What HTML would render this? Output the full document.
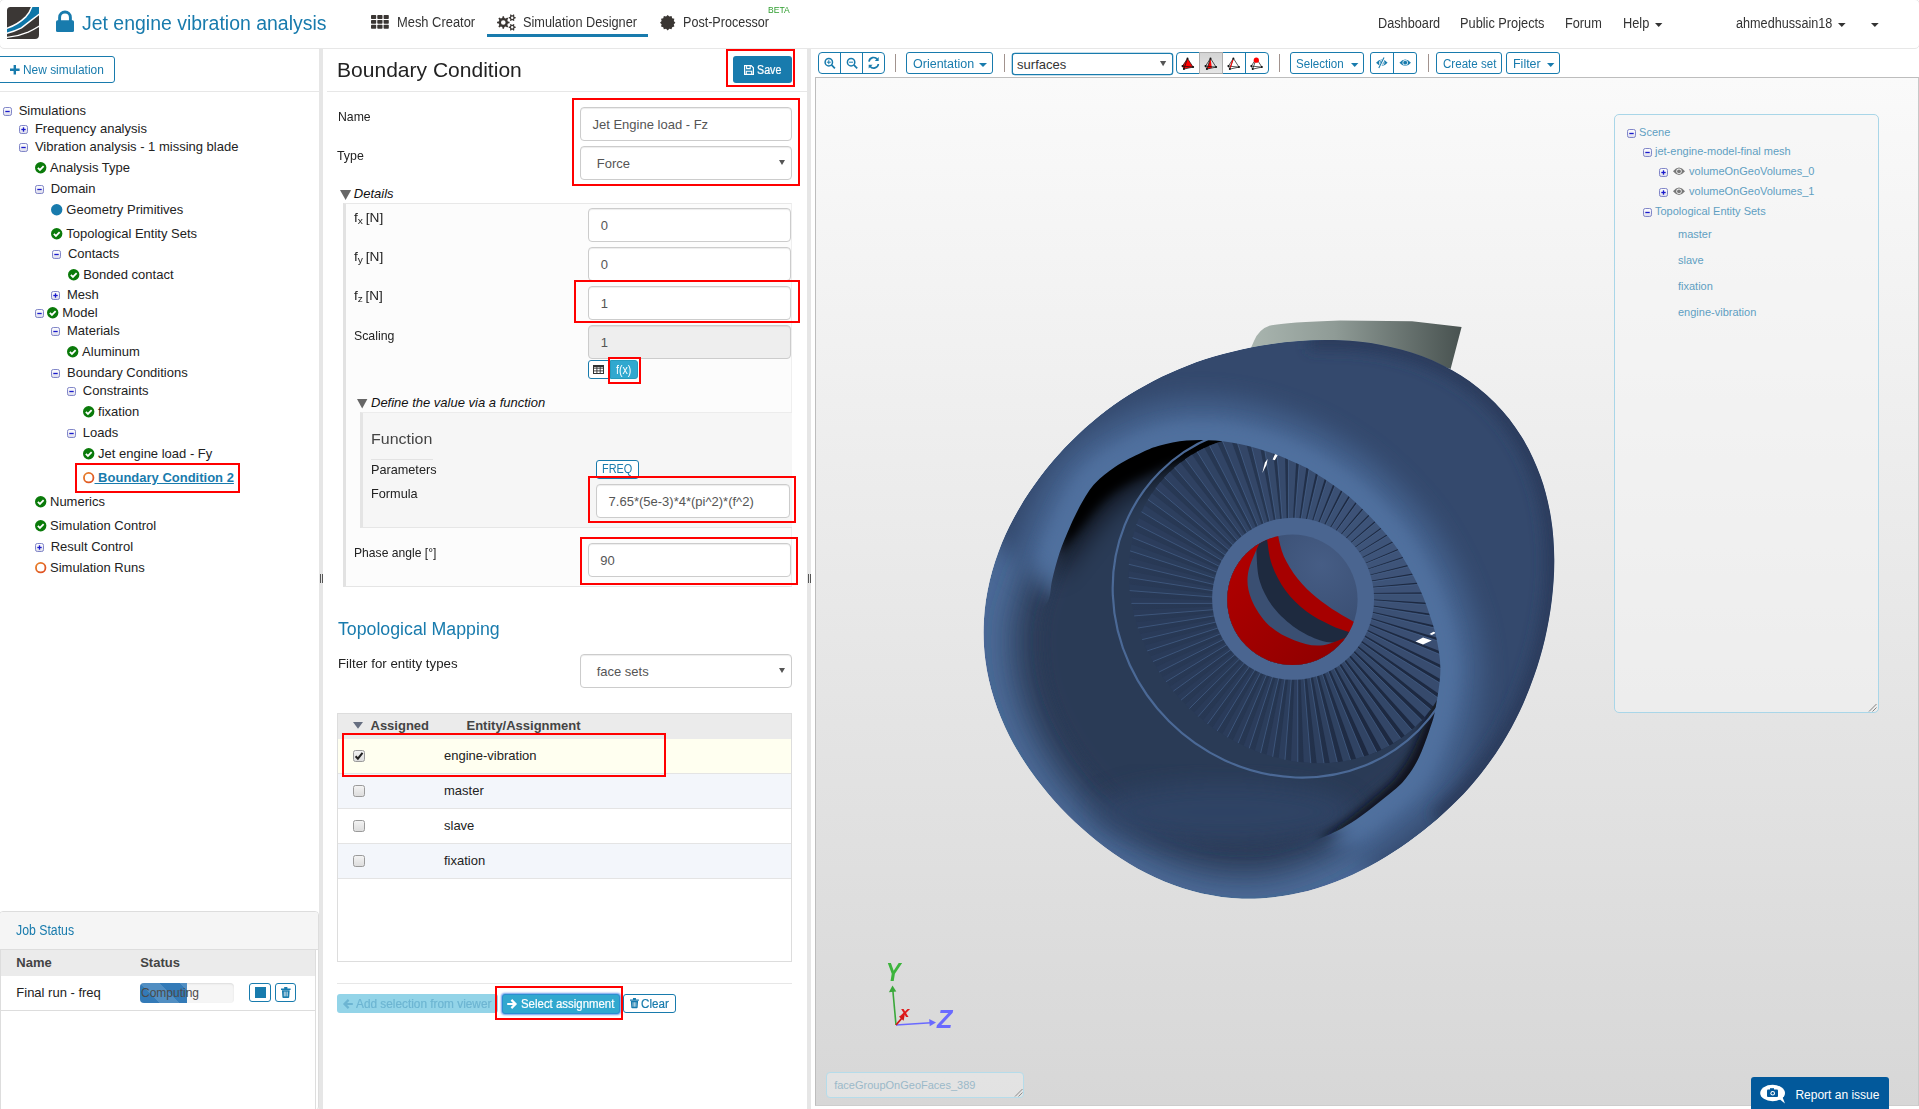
<!DOCTYPE html>
<html lang="en"><head><meta charset="utf-8"><title>Jet engine vibration analysis</title>
<style>
html,body{margin:0;padding:0;background:#fff;overflow:hidden;}
body{width:1919px;height:1109px;position:relative;overflow:hidden;font-family:"Liberation Sans",sans-serif;}
body>div,body>span,body>svg{position:absolute;box-sizing:border-box;}
body>div>div{position:absolute;box-sizing:border-box;}
.t{white-space:nowrap;transform-origin:0 0;display:block;}
svg{overflow:visible;}
</style></head>
<body>
<svg width="0" height="0" style="left:0;top:0;"><defs><linearGradient id="tg" x1="0" y1="0" x2="0" y2="1"><stop offset="0" stop-color="#fff"/><stop offset="1" stop-color="#dcdcec"/></linearGradient><linearGradient id="rg" x1="0" y1="0" x2="1" y2="1"><stop offset="0" stop-color="#e8832a"/><stop offset="1" stop-color="#de4a22"/></linearGradient><linearGradient id="cb" x1="0" y1="0" x2="0" y2="1"><stop offset="0" stop-color="#f4f4f4"/><stop offset="1" stop-color="#dcdcdc"/></linearGradient></defs></svg>
<div style="left:815px;top:77px;width:1104px;height:1029px;border:1px solid #bdbdbd;border-right-color:#c8c8c8;border-bottom-color:#cdcdcd;background:linear-gradient(#fafafa,#d7d7d7);"></div>
<svg style="left:960px;top:300px;" width="640" height="620" viewBox="960 300 640 620"><defs><linearGradient id="py" x1="0" y1="0" x2="1" y2="0"><stop offset="0" stop-color="#a9b5af"/><stop offset=".4" stop-color="#8f9b96"/><stop offset="1" stop-color="#485250"/></linearGradient><linearGradient id="rd" x1="0" y1="0" x2="1" y2="1"><stop offset="0" stop-color="#bb0000"/><stop offset="1" stop-color="#840000"/></linearGradient><linearGradient id="fd" x1="0" y1="1" x2="1" y2="0"><stop offset="0" stop-color="#2a3b58"/><stop offset=".45" stop-color="#263651"/><stop offset=".62" stop-color="#1d2941"/><stop offset="1" stop-color="#1d2941"/></linearGradient><radialGradient id="hb" cx=".7" cy=".25" r=".8"><stop offset="0" stop-color="#465d85"/><stop offset="1" stop-color="#324567"/></radialGradient><clipPath id="co"><path d="M983.9 620.0C984.6 606.8 986.7 593.4 989.7 580.6C992.7 567.8 997.0 555.2 1001.9 543.1C1006.8 531.1 1012.8 519.4 1019.2 508.4C1025.7 497.3 1032.9 486.7 1040.5 476.6C1048.1 466.5 1056.3 456.9 1064.8 447.8C1073.4 438.8 1082.4 430.2 1091.9 422.2C1101.3 414.2 1111.2 406.6 1121.4 399.8C1131.7 392.9 1142.4 386.6 1153.4 380.9C1164.4 375.2 1175.8 370.2 1187.4 365.7C1199.0 361.2 1210.9 357.4 1223.1 354.1C1235.3 350.8 1247.7 348.0 1260.4 345.8C1273.1 343.6 1286.1 341.9 1299.3 341.0C1312.5 340.1 1326.1 339.6 1339.7 340.3C1353.4 340.9 1367.4 342.2 1381.2 344.9C1394.9 347.5 1409.0 351.1 1422.3 356.2C1435.6 361.3 1448.9 367.7 1461.0 375.5C1473.1 383.2 1484.8 392.5 1494.9 402.8C1505.1 413.0 1514.2 424.8 1521.8 437.0C1529.4 449.3 1535.6 462.7 1540.5 476.2C1545.4 489.6 1548.7 503.8 1551.0 517.7C1553.3 531.6 1554.1 545.8 1554.3 559.6C1554.4 573.3 1553.4 587.0 1551.8 600.3C1550.2 613.6 1547.8 626.6 1544.9 639.2C1541.9 651.9 1538.3 664.2 1534.1 676.1C1530.0 688.1 1525.2 699.7 1519.9 711.0C1514.6 722.2 1508.7 733.1 1502.2 743.5C1495.7 753.9 1488.6 763.9 1481.1 773.4C1473.6 782.9 1465.5 792.0 1457.0 800.6C1448.5 809.2 1439.6 817.4 1430.2 825.1C1420.9 832.9 1411.2 840.2 1401.1 847.0C1390.9 853.9 1380.4 860.4 1369.5 866.2C1358.5 872.0 1347.1 877.5 1335.3 881.9C1323.5 886.4 1311.2 890.4 1298.7 893.1C1286.2 895.9 1273.2 897.8 1260.3 898.4C1247.4 899.1 1234.1 898.6 1221.2 896.9C1208.3 895.2 1195.3 892.2 1182.8 888.3C1170.4 884.4 1158.1 879.2 1146.5 873.3C1134.8 867.4 1123.6 860.5 1112.8 853.0C1102.1 845.6 1091.9 837.3 1082.1 828.6C1072.4 820.0 1063.1 810.7 1054.4 800.9C1045.7 791.1 1037.4 780.9 1029.9 770.0C1022.4 759.2 1015.3 747.9 1009.3 736.1C1003.4 724.2 998.1 711.8 994.1 699.1C990.1 686.4 987.0 673.2 985.3 660.0C983.6 646.8 983.1 633.2 983.9 620.0Z"/></clipPath><clipPath id="cr"><path clip-rule="evenodd" d="M983.9 620.0C984.6 606.8 986.7 593.4 989.7 580.6C992.7 567.8 997.0 555.2 1001.9 543.1C1006.8 531.1 1012.8 519.4 1019.2 508.4C1025.7 497.3 1032.9 486.7 1040.5 476.6C1048.1 466.5 1056.3 456.9 1064.8 447.8C1073.4 438.8 1082.4 430.2 1091.9 422.2C1101.3 414.2 1111.2 406.6 1121.4 399.8C1131.7 392.9 1142.4 386.6 1153.4 380.9C1164.4 375.2 1175.8 370.2 1187.4 365.7C1199.0 361.2 1210.9 357.4 1223.1 354.1C1235.3 350.8 1247.7 348.0 1260.4 345.8C1273.1 343.6 1286.1 341.9 1299.3 341.0C1312.5 340.1 1326.1 339.6 1339.7 340.3C1353.4 340.9 1367.4 342.2 1381.2 344.9C1394.9 347.5 1409.0 351.1 1422.3 356.2C1435.6 361.3 1448.9 367.7 1461.0 375.5C1473.1 383.2 1484.8 392.5 1494.9 402.8C1505.1 413.0 1514.2 424.8 1521.8 437.0C1529.4 449.3 1535.6 462.7 1540.5 476.2C1545.4 489.6 1548.7 503.8 1551.0 517.7C1553.3 531.6 1554.1 545.8 1554.3 559.6C1554.4 573.3 1553.4 587.0 1551.8 600.3C1550.2 613.6 1547.8 626.6 1544.9 639.2C1541.9 651.9 1538.3 664.2 1534.1 676.1C1530.0 688.1 1525.2 699.7 1519.9 711.0C1514.6 722.2 1508.7 733.1 1502.2 743.5C1495.7 753.9 1488.6 763.9 1481.1 773.4C1473.6 782.9 1465.5 792.0 1457.0 800.6C1448.5 809.2 1439.6 817.4 1430.2 825.1C1420.9 832.9 1411.2 840.2 1401.1 847.0C1390.9 853.9 1380.4 860.4 1369.5 866.2C1358.5 872.0 1347.1 877.5 1335.3 881.9C1323.5 886.4 1311.2 890.4 1298.7 893.1C1286.2 895.9 1273.2 897.8 1260.3 898.4C1247.4 899.1 1234.1 898.6 1221.2 896.9C1208.3 895.2 1195.3 892.2 1182.8 888.3C1170.4 884.4 1158.1 879.2 1146.5 873.3C1134.8 867.4 1123.6 860.5 1112.8 853.0C1102.1 845.6 1091.9 837.3 1082.1 828.6C1072.4 820.0 1063.1 810.7 1054.4 800.9C1045.7 791.1 1037.4 780.9 1029.9 770.0C1022.4 759.2 1015.3 747.9 1009.3 736.1C1003.4 724.2 998.1 711.8 994.1 699.1C990.1 686.4 987.0 673.2 985.3 660.0C983.6 646.8 983.1 633.2 983.9 620.0ZM1048.5 600.0C1051.2 593.4 1050.3 588.1 1052.1 580.3C1053.9 572.5 1056.4 562.3 1059.4 553.3C1062.4 544.3 1066.3 534.9 1070.2 526.2C1074.1 517.5 1078.6 508.2 1082.8 501.0C1087.0 493.8 1090.0 488.7 1095.4 483.0C1100.8 477.3 1107.5 471.8 1115.3 466.7C1123.1 461.6 1134.8 455.8 1142.3 452.3C1149.8 448.8 1152.6 447.5 1160.0 445.5C1167.4 443.5 1177.3 441.3 1186.5 440.5C1195.7 439.7 1205.8 439.8 1215.4 440.5C1225.0 441.2 1234.6 442.7 1244.2 444.9C1253.8 447.1 1264.5 450.5 1273.1 453.5C1281.7 456.5 1289.4 460.0 1296.0 463.0C1302.6 466.0 1304.3 466.3 1312.5 471.4C1320.7 476.4 1335.2 485.6 1344.9 493.3C1354.6 501.0 1362.8 509.2 1370.9 517.6C1379.0 526.0 1387.1 534.9 1393.6 543.6C1400.1 552.3 1405.2 561.5 1409.8 569.6C1414.4 577.7 1418.0 585.1 1421.2 592.3C1424.4 599.5 1426.5 605.5 1429.0 613.0C1431.5 620.5 1434.4 627.9 1436.3 637.4C1438.2 646.9 1440.5 657.9 1440.4 669.8C1440.3 681.7 1437.4 698.5 1435.5 708.8C1433.6 719.1 1431.7 723.6 1428.9 731.7C1426.1 739.9 1422.4 750.2 1418.8 757.7C1415.2 765.2 1411.5 771.0 1407.2 776.5C1402.9 782.0 1402.3 783.3 1393.0 791.0C1383.7 798.7 1364.0 814.6 1351.3 822.8C1338.6 830.9 1328.5 834.9 1317.0 839.9C1305.5 844.9 1293.5 849.6 1282.0 853.0C1270.5 856.4 1259.3 859.2 1248.0 860.0C1236.7 860.8 1225.3 859.7 1214.0 858.0C1202.7 856.3 1191.2 854.2 1180.0 850.0C1168.8 845.8 1159.5 840.5 1147.0 833.0C1134.5 825.5 1117.5 815.5 1105.0 805.0C1092.5 794.5 1081.5 782.8 1072.0 770.0C1062.5 757.2 1054.0 741.3 1048.0 728.0C1042.0 714.7 1038.7 703.0 1036.0 690.0C1033.3 677.0 1032.0 661.7 1032.0 650.0C1032.0 638.3 1033.2 628.3 1036.0 620.0C1038.8 611.7 1045.8 606.6 1048.5 600.0Z"/></clipPath><clipPath id="ch"><circle cx="1292.4" cy="599.7" r="65.2"/></clipPath><filter id="b4" x="-30%" y="-30%" width="160%" height="160%"><feGaussianBlur stdDeviation="4"/></filter><filter id="b7" x="-30%" y="-30%" width="160%" height="160%"><feGaussianBlur stdDeviation="7"/></filter><filter id="b12" x="-30%" y="-30%" width="160%" height="160%"><feGaussianBlur stdDeviation="12"/></filter><filter id="b16" x="-30%" y="-30%" width="160%" height="160%"><feGaussianBlur stdDeviation="16"/></filter><mask id="mk" maskUnits="userSpaceOnUse" x="900" y="250" width="760" height="720"><path d="M770 345L1050 590L1330 835L1700 1150L1900 200Z" fill="#fff" filter="url(#b12)"/></mask></defs><path d="M1250 350L1254 341Q1259 329 1270 325.5Q1288 322 1340 320.4L1412 321.3L1461.6 327L1450.6 369L1380 346Z" fill="url(#py)"/><g clip-path="url(#co)"><path d="M983.9 620.0C984.6 606.8 986.7 593.4 989.7 580.6C992.7 567.8 997.0 555.2 1001.9 543.1C1006.8 531.1 1012.8 519.4 1019.2 508.4C1025.7 497.3 1032.9 486.7 1040.5 476.6C1048.1 466.5 1056.3 456.9 1064.8 447.8C1073.4 438.8 1082.4 430.2 1091.9 422.2C1101.3 414.2 1111.2 406.6 1121.4 399.8C1131.7 392.9 1142.4 386.6 1153.4 380.9C1164.4 375.2 1175.8 370.2 1187.4 365.7C1199.0 361.2 1210.9 357.4 1223.1 354.1C1235.3 350.8 1247.7 348.0 1260.4 345.8C1273.1 343.6 1286.1 341.9 1299.3 341.0C1312.5 340.1 1326.1 339.6 1339.7 340.3C1353.4 340.9 1367.4 342.2 1381.2 344.9C1394.9 347.5 1409.0 351.1 1422.3 356.2C1435.6 361.3 1448.9 367.7 1461.0 375.5C1473.1 383.2 1484.8 392.5 1494.9 402.8C1505.1 413.0 1514.2 424.8 1521.8 437.0C1529.4 449.3 1535.6 462.7 1540.5 476.2C1545.4 489.6 1548.7 503.8 1551.0 517.7C1553.3 531.6 1554.1 545.8 1554.3 559.6C1554.4 573.3 1553.4 587.0 1551.8 600.3C1550.2 613.6 1547.8 626.6 1544.9 639.2C1541.9 651.9 1538.3 664.2 1534.1 676.1C1530.0 688.1 1525.2 699.7 1519.9 711.0C1514.6 722.2 1508.7 733.1 1502.2 743.5C1495.7 753.9 1488.6 763.9 1481.1 773.4C1473.6 782.9 1465.5 792.0 1457.0 800.6C1448.5 809.2 1439.6 817.4 1430.2 825.1C1420.9 832.9 1411.2 840.2 1401.1 847.0C1390.9 853.9 1380.4 860.4 1369.5 866.2C1358.5 872.0 1347.1 877.5 1335.3 881.9C1323.5 886.4 1311.2 890.4 1298.7 893.1C1286.2 895.9 1273.2 897.8 1260.3 898.4C1247.4 899.1 1234.1 898.6 1221.2 896.9C1208.3 895.2 1195.3 892.2 1182.8 888.3C1170.4 884.4 1158.1 879.2 1146.5 873.3C1134.8 867.4 1123.6 860.5 1112.8 853.0C1102.1 845.6 1091.9 837.3 1082.1 828.6C1072.4 820.0 1063.1 810.7 1054.4 800.9C1045.7 791.1 1037.4 780.9 1029.9 770.0C1022.4 759.2 1015.3 747.9 1009.3 736.1C1003.4 724.2 998.1 711.8 994.1 699.1C990.1 686.4 987.0 673.2 985.3 660.0C983.6 646.8 983.1 633.2 983.9 620.0Z" fill="#4b6a97"/><path d="M1013.9 620.0C1015.6 608.2 1019.6 596.5 1023.4 585.3C1027.1 574.2 1031.7 563.4 1036.5 553.1C1041.4 542.7 1046.5 532.6 1052.2 523.0C1058.0 513.5 1064.5 504.4 1071.2 495.8C1077.9 487.1 1085.1 478.9 1092.6 471.2C1100.1 463.4 1108.0 456.0 1116.2 449.2C1124.4 442.3 1132.9 435.9 1141.8 430.0C1150.7 424.0 1159.9 418.6 1169.4 413.7C1178.9 408.8 1188.7 404.4 1198.7 400.5C1208.7 396.6 1219.0 393.2 1229.5 390.2C1240.0 387.2 1250.7 384.6 1261.7 382.5C1272.7 380.4 1284.0 378.7 1295.5 377.6C1307.0 376.5 1318.8 375.8 1330.8 376.1C1342.8 376.3 1355.2 377.1 1367.3 379.1C1379.5 381.2 1392.0 384.0 1403.8 388.3C1415.6 392.6 1427.5 398.0 1438.2 404.7C1448.9 411.5 1459.3 419.6 1468.2 428.6C1477.1 437.7 1485.1 448.1 1491.7 458.9C1498.2 469.8 1503.5 481.8 1507.5 493.7C1511.6 505.6 1514.1 518.3 1515.8 530.5C1517.5 542.8 1517.8 555.3 1517.6 567.4C1517.3 579.4 1516.0 591.4 1514.3 602.9C1512.6 614.5 1510.1 625.7 1507.3 636.6C1504.4 647.5 1501.1 658.1 1497.2 668.3C1493.4 678.5 1489.1 688.5 1484.4 698.0C1479.6 707.6 1474.4 716.8 1468.7 725.7C1463.1 734.5 1456.9 742.9 1450.4 751.1C1443.9 759.2 1437.1 767.0 1430.0 774.5C1422.8 782.0 1415.4 789.2 1407.6 796.1C1399.8 803.0 1391.5 809.2 1383.1 815.9C1374.7 822.5 1366.3 829.6 1357.2 835.8C1348.0 842.0 1338.4 848.0 1328.1 853.2C1317.9 858.4 1307.1 863.3 1295.9 866.9C1284.8 870.4 1272.9 873.4 1261.1 874.7C1249.3 875.9 1237.1 875.6 1225.2 874.3C1213.2 873.1 1201.2 870.7 1189.6 867.4C1178.1 864.0 1166.6 859.5 1155.7 854.3C1144.8 849.1 1134.2 842.9 1124.1 836.2C1114.0 829.6 1104.1 822.3 1095.1 814.3C1086.0 806.2 1077.6 797.2 1069.9 787.9C1062.2 778.6 1055.1 768.6 1048.7 758.3C1042.3 748.0 1036.3 737.3 1031.4 726.2C1026.5 715.2 1022.2 703.6 1019.1 691.9C1016.1 680.2 1014.0 668.1 1013.1 656.1C1012.2 644.1 1012.2 631.8 1013.9 620.0Z" fill="#293a57" filter="url(#b16)"/><path d="M1013.9 620.0C1015.6 608.2 1019.6 596.5 1023.4 585.3C1027.1 574.2 1031.7 563.4 1036.5 553.1C1041.4 542.7 1046.5 532.6 1052.2 523.0C1058.0 513.5 1064.5 504.4 1071.2 495.8C1077.9 487.1 1085.1 478.9 1092.6 471.2C1100.1 463.4 1108.0 456.0 1116.2 449.2C1124.4 442.3 1132.9 435.9 1141.8 430.0C1150.7 424.0 1159.9 418.6 1169.4 413.7C1178.9 408.8 1188.7 404.4 1198.7 400.5C1208.7 396.6 1219.0 393.2 1229.5 390.2C1240.0 387.2 1250.7 384.6 1261.7 382.5C1272.7 380.4 1284.0 378.7 1295.5 377.6C1307.0 376.5 1318.8 375.8 1330.8 376.1C1342.8 376.3 1355.2 377.1 1367.3 379.1C1379.5 381.2 1392.0 384.0 1403.8 388.3C1415.6 392.6 1427.5 398.0 1438.2 404.7C1448.9 411.5 1459.3 419.6 1468.2 428.6C1477.1 437.7 1485.1 448.1 1491.7 458.9C1498.2 469.8 1503.5 481.8 1507.5 493.7C1511.6 505.6 1514.1 518.3 1515.8 530.5C1517.5 542.8 1517.8 555.3 1517.6 567.4C1517.3 579.4 1516.0 591.4 1514.3 602.9C1512.6 614.5 1510.1 625.7 1507.3 636.6C1504.4 647.5 1501.1 658.1 1497.2 668.3C1493.4 678.5 1489.1 688.5 1484.4 698.0C1479.6 707.6 1474.4 716.8 1468.7 725.7C1463.1 734.5 1456.9 742.9 1450.4 751.1C1443.9 759.2 1437.1 767.0 1430.0 774.5C1422.8 782.0 1415.4 789.2 1407.6 796.1C1399.8 803.0 1391.5 809.2 1383.1 815.9C1374.7 822.5 1366.3 829.6 1357.2 835.8C1348.0 842.0 1338.4 848.0 1328.1 853.2C1317.9 858.4 1307.1 863.3 1295.9 866.9C1284.8 870.4 1272.9 873.4 1261.1 874.7C1249.3 875.9 1237.1 875.6 1225.2 874.3C1213.2 873.1 1201.2 870.7 1189.6 867.4C1178.1 864.0 1166.6 859.5 1155.7 854.3C1144.8 849.1 1134.2 842.9 1124.1 836.2C1114.0 829.6 1104.1 822.3 1095.1 814.3C1086.0 806.2 1077.6 797.2 1069.9 787.9C1062.2 778.6 1055.1 768.6 1048.7 758.3C1042.3 748.0 1036.3 737.3 1031.4 726.2C1026.5 715.2 1022.2 703.6 1019.1 691.9C1016.1 680.2 1014.0 668.1 1013.1 656.1C1012.2 644.1 1012.2 631.8 1013.9 620.0Z" fill="#293a57" filter="url(#b7)" transform="translate(1255 640) scale(.88) translate(-1255 -640)"/><ellipse cx="1225" cy="812" rx="130" ry="30" fill="#31466a" filter="url(#b12)" opacity=".7"/><path d="M1052.1 580.3C1052.7 575.6 1053.6 561.5 1055.7 552.0C1057.8 542.5 1061.3 532.6 1064.7 523.4C1068.2 514.1 1072.4 504.2 1076.3 496.5C1080.3 488.8 1083.1 483.3 1088.5 477.1C1093.9 471.0 1100.7 465.1 1108.7 459.5C1116.7 454.0 1128.9 447.8 1136.6 444.1C1144.4 440.3 1147.4 439.0 1155.2 437.0C1162.9 435.0 1173.4 432.8 1183.1 432.1C1192.8 431.4 1203.4 431.8 1213.5 432.9C1223.6 434.0 1233.6 436.0 1243.6 438.8C1253.6 441.6 1264.6 445.6 1273.4 449.6C1282.1 453.7 1292.2 460.8 1296.0 463.0L1296.0 463.0C1292.0 463.6 1280.5 466.2 1272.2 466.7C1264.0 467.1 1254.6 465.8 1246.3 465.7C1237.9 465.7 1230.0 465.8 1221.9 466.4C1213.9 466.9 1205.7 467.6 1198.1 469.0C1190.6 470.3 1182.5 472.5 1176.4 474.4C1170.3 476.2 1168.1 477.5 1161.7 480.2C1155.2 483.0 1145.0 487.3 1137.9 491.0C1130.7 494.8 1124.3 498.8 1118.8 502.9C1113.3 507.1 1109.7 510.7 1104.7 516.2C1099.7 521.7 1094.3 528.9 1088.8 535.8C1083.3 542.7 1078.0 550.3 1071.8 557.7C1065.7 565.1 1055.4 576.5 1052.1 580.3Z" fill="#010206" filter="url(#b12)" opacity=".65"/><path d="M1059.4 553.3C1060.5 548.4 1063.3 533.6 1066.3 524.2C1069.2 514.8 1073.4 504.9 1077.1 497.1C1080.9 489.3 1083.6 483.7 1088.8 477.4C1094.1 471.2 1100.8 465.2 1108.7 459.6C1116.7 454.1 1128.9 447.8 1136.6 444.1C1144.4 440.3 1147.5 439.0 1155.2 437.1C1163.0 435.2 1173.5 433.1 1183.2 432.5C1193.0 432.0 1203.6 432.5 1213.7 433.8C1223.8 435.2 1233.9 437.2 1243.8 440.5C1253.7 443.8 1268.2 451.3 1273.1 453.5L1273.1 453.5C1268.4 453.7 1254.1 454.2 1245.2 454.5C1236.2 454.8 1227.7 454.6 1219.1 455.2C1210.5 455.8 1201.8 456.6 1193.7 458.1C1185.6 459.5 1177.0 461.9 1170.5 464.0C1164.0 466.0 1161.6 467.3 1154.8 470.4C1148.0 473.4 1137.2 478.1 1129.7 482.3C1122.2 486.4 1115.6 490.7 1109.8 495.3C1104.1 499.9 1100.4 503.7 1095.3 509.6C1090.1 515.5 1084.8 523.3 1078.8 530.6C1072.8 537.9 1062.6 549.5 1059.4 553.3Z" fill="#010206" filter="url(#b4)"/><path d="M1440.4 669.8C1440.4 676.7 1441.3 700.2 1440.5 711.2C1439.8 722.3 1438.4 727.4 1436.0 736.2C1433.6 745.0 1430.0 756.2 1426.3 764.0C1422.6 771.9 1418.7 778.0 1414.0 783.6C1409.3 789.2 1408.3 790.2 1398.2 797.6C1388.1 805.0 1367.1 820.8 1353.6 827.9C1340.1 834.9 1323.1 837.9 1317.0 839.9L1317.0 839.9C1322.4 836.3 1337.4 827.4 1349.2 818.2C1361.1 809.1 1379.7 793.1 1388.3 785.1C1396.9 777.0 1397.1 775.6 1401.1 770.1C1405.0 764.6 1408.5 759.1 1412.1 752.0C1415.6 744.9 1419.4 735.2 1422.5 727.6C1425.7 720.1 1428.0 716.3 1431.0 706.6C1434.0 697.0 1438.8 675.9 1440.4 669.8Z" fill="#070b13" filter="url(#b4)" opacity=".9"/><ellipse cx="1293.1" cy="598.8" rx="177" ry="151" fill="url(#fd)" transform="rotate(45 1293.1 598.8)"/><path d="M1371.1 600.4L1456.6 607.0L1457.4 617.4L1370.8 605.2Z" fill="#3c5175"/><path d="M1370.7 606.5L1457.5 620.1L1457.5 630.5L1370.1 611.3Z" fill="#3b5074"/><path d="M1369.9 612.5L1457.4 633.3L1456.5 643.6L1368.9 617.2Z" fill="#3a4f73"/><path d="M1368.6 618.5L1456.1 646.7L1454.3 656.8L1367.3 623.0Z" fill="#3a4e72"/><path d="M1366.8 624.4L1453.6 660.0L1450.8 669.8L1365.2 628.7Z" fill="#394d71"/><path d="M1364.6 630.1L1449.8 673.1L1446.2 682.4L1362.6 634.1Z" fill="#384c6f"/><path d="M1361.9 635.6L1444.7 685.8L1440.2 694.7L1359.7 639.4Z" fill="#374b6e"/><path d="M1358.8 640.9L1438.3 698.1L1433.1 706.2L1356.4 644.4Z" fill="#364a6c"/><path d="M1355.3 645.9L1430.6 709.6L1424.7 717.0L1352.7 649.2Z" fill="#35496b"/><path d="M1351.4 650.6L1421.8 720.3L1415.2 726.9L1348.6 653.6Z" fill="#34486a"/><path d="M1347.1 655.0L1411.8 730.0L1404.8 735.7L1344.2 657.7Z" fill="#334768"/><path d="M1342.6 659.1L1400.9 738.5L1393.5 743.3L1339.5 661.5Z" fill="#334667"/><path d="M1337.7 662.8L1389.1 745.9L1381.5 749.7L1334.5 664.9Z" fill="#324565"/><path d="M1332.5 666.1L1376.7 751.9L1369.0 754.9L1329.3 667.9Z" fill="#314464"/><path d="M1327.1 669.0L1363.8 756.6L1356.1 758.8L1323.8 670.5Z" fill="#304363"/><path d="M1321.5 671.4L1350.6 760.1L1343.0 761.5L1318.2 672.7Z" fill="#2f4261"/><path d="M1315.7 673.4L1337.3 762.2L1329.8 762.9L1312.4 674.4Z" fill="#2f4160"/><path d="M1309.8 675.0L1324.0 763.2L1316.7 763.3L1306.5 675.6Z" fill="#2e405f"/><path d="M1303.8 676.1L1310.8 763.1L1303.7 762.6L1300.5 676.5Z" fill="#2d3f5e"/><path d="M1297.7 676.7L1297.8 761.9L1291.0 760.9L1294.4 676.8Z" fill="#2d3e5d"/><path d="M1291.5 676.8L1285.0 759.8L1278.6 758.3L1288.4 676.7Z" fill="#2c3e5d"/><path d="M1285.4 676.4L1272.7 756.8L1266.5 754.9L1282.3 676.1Z" fill="#2c3d5c"/><path d="M1279.4 675.6L1260.7 753.0L1254.8 750.8L1276.3 675.0Z" fill="#2b3d5b"/><path d="M1273.4 674.3L1249.2 748.4L1243.6 745.9L1270.4 673.4Z" fill="#2b3c5b"/><path d="M1267.5 672.5L1238.1 743.2L1232.7 740.4L1264.7 671.4Z" fill="#2b3c5a"/><path d="M1261.8 670.3L1227.4 737.4L1222.3 734.3L1259.1 669.0Z" fill="#2b3c5a"/><path d="M1256.3 667.6L1217.2 731.0L1212.4 727.7L1253.7 666.1Z" fill="#2a3b5a"/><path d="M1251.0 664.5L1207.5 724.0L1202.9 720.5L1248.6 662.8Z" fill="#2a3b59"/><path d="M1246.0 661.0L1198.2 716.6L1193.9 712.8L1243.7 659.1Z" fill="#2a3b59"/><path d="M1241.3 657.1L1189.4 708.6L1185.3 704.6L1239.1 655.1Z" fill="#2a3b59"/><path d="M1236.9 652.8L1181.1 700.1L1177.3 695.9L1234.9 650.7Z" fill="#2a3b59"/><path d="M1232.8 648.3L1173.3 691.2L1169.7 686.8L1231.0 646.0Z" fill="#2a3b59"/><path d="M1229.1 643.4L1165.9 681.8L1162.6 677.1L1227.5 640.9Z" fill="#2a3b59"/><path d="M1225.8 638.2L1159.1 672.0L1156.0 667.1L1224.4 635.7Z" fill="#2a3b59"/><path d="M1222.9 632.8L1152.9 661.6L1150.1 656.5L1221.7 630.1Z" fill="#2a3b59"/><path d="M1220.5 627.2L1147.2 650.9L1144.7 645.5L1219.4 624.4Z" fill="#2a3b59"/><path d="M1218.5 621.4L1142.2 639.6L1140.0 634.1L1217.6 618.6Z" fill="#2a3b59"/><path d="M1216.9 615.5L1137.8 628.0L1136.0 622.2L1216.3 612.6Z" fill="#2a3b59"/><path d="M1215.8 609.5L1134.2 615.9L1132.8 609.9L1215.5 606.5Z" fill="#2a3b59"/><path d="M1215.2 603.4L1131.4 603.4L1130.4 597.2L1215.1 600.4Z" fill="#2a3b59"/><path d="M1215.1 597.2L1129.6 590.6L1129.0 584.3L1215.2 594.3Z" fill="#2a3c5a"/><path d="M1215.5 591.1L1128.7 577.5L1128.6 571.0L1215.8 588.1Z" fill="#2b3c5a"/><path d="M1216.3 585.1L1128.8 564.3L1129.3 557.7L1216.9 582.1Z" fill="#2b3c5a"/><path d="M1217.6 579.1L1130.1 550.9L1131.2 544.3L1218.5 576.1Z" fill="#2b3d5b"/><path d="M1219.4 573.2L1132.6 537.6L1134.4 530.9L1220.5 570.3Z" fill="#2c3d5c"/><path d="M1221.6 567.5L1136.4 524.5L1138.9 517.9L1223.0 564.6Z" fill="#2c3d5c"/><path d="M1224.3 562.0L1141.5 511.8L1144.7 505.3L1225.9 559.2Z" fill="#2c3e5d"/><path d="M1227.4 556.7L1147.9 499.5L1151.9 493.3L1229.2 554.0Z" fill="#2d3f5e"/><path d="M1230.9 551.7L1155.6 488.0L1160.3 482.0L1233.0 549.1Z" fill="#2e3f5f"/><path d="M1234.8 547.0L1164.4 477.3L1169.9 471.8L1237.1 544.5Z" fill="#2e4060"/><path d="M1239.1 542.6L1174.4 467.6L1180.5 462.6L1241.6 540.2Z" fill="#2f4161"/><path d="M1243.6 538.5L1185.3 459.1L1192.1 454.6L1246.4 536.3Z" fill="#304262"/><path d="M1248.5 534.8L1197.1 451.7L1204.4 448.0L1251.6 532.8Z" fill="#304363"/><path d="M1253.7 531.5L1209.5 445.7L1217.3 442.7L1257.0 529.7Z" fill="#314465"/><path d="M1259.1 528.6L1222.4 441.0L1230.6 438.7L1262.6 527.0Z" fill="#324566"/><path d="M1264.7 526.2L1235.6 437.5L1244.1 436.0L1268.4 524.8Z" fill="#334667"/><path d="M1270.5 524.2L1248.9 435.4L1257.7 434.6L1274.4 523.1Z" fill="#344769"/><path d="M1276.4 522.6L1262.2 434.4L1271.2 434.3L1280.5 521.8Z" fill="#35496a"/><path d="M1282.4 521.5L1275.4 434.5L1284.5 435.2L1286.6 521.1Z" fill="#364a6c"/><path d="M1288.5 520.9L1288.4 435.7L1297.5 437.1L1292.9 520.8Z" fill="#374b6d"/><path d="M1294.7 520.8L1301.2 437.8L1310.1 439.9L1299.1 521.0Z" fill="#384c6f"/><path d="M1300.8 521.2L1313.5 440.8L1322.4 443.6L1305.3 521.8Z" fill="#384d70"/><path d="M1306.8 522.0L1325.5 444.6L1334.2 448.0L1311.4 523.0Z" fill="#394e71"/><path d="M1312.8 523.3L1337.0 449.2L1345.6 453.1L1317.3 524.7Z" fill="#3a4f73"/><path d="M1318.7 525.1L1348.1 454.4L1356.5 458.9L1323.1 526.8Z" fill="#3b5074"/><path d="M1324.4 527.3L1358.8 460.2L1366.9 465.2L1328.8 529.4Z" fill="#3b5175"/><path d="M1329.9 530.0L1369.0 466.6L1376.9 472.2L1334.2 532.5Z" fill="#3c5176"/><path d="M1335.2 533.1L1378.7 473.6L1386.3 479.6L1339.3 535.9Z" fill="#3d5277"/><path d="M1340.2 536.6L1388.0 481.0L1395.3 487.6L1344.1 539.8Z" fill="#3d5377"/><path d="M1344.9 540.5L1396.8 489.0L1403.7 496.0L1348.6 544.0Z" fill="#3d5378"/><path d="M1349.3 544.8L1405.1 497.5L1411.7 504.9L1352.8 548.6Z" fill="#3e5478"/><path d="M1353.4 549.3L1412.9 506.4L1419.1 514.2L1356.5 553.4Z" fill="#3e5479"/><path d="M1357.1 554.2L1420.3 515.8L1426.0 524.0L1359.9 558.5Z" fill="#3e5479"/><path d="M1360.4 559.4L1427.1 525.6L1432.4 534.3L1362.9 563.9Z" fill="#3e5479"/><path d="M1363.3 564.8L1433.3 536.0L1438.1 545.0L1365.4 569.5Z" fill="#3e5479"/><path d="M1365.7 570.4L1439.0 546.7L1443.3 556.1L1367.5 575.2Z" fill="#3e5479"/><path d="M1367.7 576.2L1444.0 558.0L1447.7 567.6L1369.1 581.1Z" fill="#3e5378"/><path d="M1369.3 582.1L1448.4 569.6L1451.4 579.6L1370.2 587.1Z" fill="#3d5378"/><path d="M1370.4 588.1L1452.0 581.7L1454.3 591.9L1370.9 593.1Z" fill="#3d5277"/><path d="M1371.0 594.2L1454.8 594.2L1456.4 604.5L1371.1 599.2Z" fill="#3c5276"/><path d="M1371.1 600.4L1456.6 607.0M1370.7 606.5L1457.5 620.1M1369.9 612.5L1457.4 633.3M1368.6 618.5L1456.1 646.7M1366.8 624.4L1453.6 660.0M1364.6 630.1L1449.8 673.1M1361.9 635.6L1444.7 685.8M1358.8 640.9L1438.3 698.1M1355.3 645.9L1430.6 709.6M1351.4 650.6L1421.8 720.3M1347.1 655.0L1411.8 730.0M1342.6 659.1L1400.9 738.5M1337.7 662.8L1389.1 745.9M1332.5 666.1L1376.7 751.9M1327.1 669.0L1363.8 756.6M1321.5 671.4L1350.6 760.1M1315.7 673.4L1337.3 762.2M1309.8 675.0L1324.0 763.2M1303.8 676.1L1310.8 763.1M1297.7 676.7L1297.8 761.9M1291.5 676.8L1285.0 759.8M1285.4 676.4L1272.7 756.8M1279.4 675.6L1260.7 753.0M1273.4 674.3L1249.2 748.4M1267.5 672.5L1238.1 743.2M1261.8 670.3L1227.4 737.4M1256.3 667.6L1217.2 731.0M1251.0 664.5L1207.5 724.0M1246.0 661.0L1198.2 716.6M1241.3 657.1L1189.4 708.6M1236.9 652.8L1181.1 700.1M1232.8 648.3L1173.3 691.2M1229.1 643.4L1165.9 681.8M1225.8 638.2L1159.1 672.0M1222.9 632.8L1152.9 661.6M1220.5 627.2L1147.2 650.9M1218.5 621.4L1142.2 639.6M1216.9 615.5L1137.8 628.0M1215.8 609.5L1134.2 615.9M1215.2 603.4L1131.4 603.4M1215.1 597.2L1129.6 590.6M1215.5 591.1L1128.7 577.5M1216.3 585.1L1128.8 564.3M1217.6 579.1L1130.1 550.9M1219.4 573.2L1132.6 537.6M1221.6 567.5L1136.4 524.5M1224.3 562.0L1141.5 511.8M1227.4 556.7L1147.9 499.5M1230.9 551.7L1155.6 488.0M1234.8 547.0L1164.4 477.3M1239.1 542.6L1174.4 467.6M1243.6 538.5L1185.3 459.1M1248.5 534.8L1197.1 451.7M1253.7 531.5L1209.5 445.7M1259.1 528.6L1222.4 441.0M1264.7 526.2L1235.6 437.5M1270.5 524.2L1248.9 435.4M1276.4 522.6L1262.2 434.4M1282.4 521.5L1275.4 434.5M1288.5 520.9L1288.4 435.7M1294.7 520.8L1301.2 437.8M1300.8 521.2L1313.5 440.8M1306.8 522.0L1325.5 444.6M1312.8 523.3L1337.0 449.2M1318.7 525.1L1348.1 454.4M1324.4 527.3L1358.8 460.2M1329.9 530.0L1369.0 466.6M1335.2 533.1L1378.7 473.6M1340.2 536.6L1388.0 481.0M1344.9 540.5L1396.8 489.0M1349.3 544.8L1405.1 497.5M1353.4 549.3L1412.9 506.4M1357.1 554.2L1420.3 515.8M1360.4 559.4L1427.1 525.6M1363.3 564.8L1433.3 536.0M1365.7 570.4L1439.0 546.7M1367.7 576.2L1444.0 558.0M1369.3 582.1L1448.4 569.6M1370.4 588.1L1452.0 581.7M1371.0 594.2L1454.8 594.2" stroke="#5878a8" stroke-width=".6" fill="none" opacity=".75"/><path d="M1262.3 473l2.6-10.5 2.8-3.5-1.2 6zM1272.6 459.5l2.6-5.8 3 .6-3.4 6zM1415.5 641.5l7.5-4 8.8 3-8.8 4zM1429.5 634l4-2.2 2.4 1-4 2.2z" fill="#fff"/><ellipse cx="1289.1" cy="601.2" rx="182.8" ry="169.8" transform="rotate(45 1289.1 601.2)" fill="none" stroke="#4b6996" stroke-width="2.2"/></g><g clip-path="url(#cr)"><g mask="url(#mk)"><path d="M983.9 620.0C984.6 606.8 986.7 593.4 989.7 580.6C992.7 567.8 997.0 555.2 1001.9 543.1C1006.8 531.1 1012.8 519.4 1019.2 508.4C1025.7 497.3 1032.9 486.7 1040.5 476.6C1048.1 466.5 1056.3 456.9 1064.8 447.8C1073.4 438.8 1082.4 430.2 1091.9 422.2C1101.3 414.2 1111.2 406.6 1121.4 399.8C1131.7 392.9 1142.4 386.6 1153.4 380.9C1164.4 375.2 1175.8 370.2 1187.4 365.7C1199.0 361.2 1210.9 357.4 1223.1 354.1C1235.3 350.8 1247.7 348.0 1260.4 345.8C1273.1 343.6 1286.1 341.9 1299.3 341.0C1312.5 340.1 1326.1 339.6 1339.7 340.3C1353.4 340.9 1367.4 342.2 1381.2 344.9C1394.9 347.5 1409.0 351.1 1422.3 356.2C1435.6 361.3 1448.9 367.7 1461.0 375.5C1473.1 383.2 1484.8 392.5 1494.9 402.8C1505.1 413.0 1514.2 424.8 1521.8 437.0C1529.4 449.3 1535.6 462.7 1540.5 476.2C1545.4 489.6 1548.7 503.8 1551.0 517.7C1553.3 531.6 1554.1 545.8 1554.3 559.6C1554.4 573.3 1553.4 587.0 1551.8 600.3C1550.2 613.6 1547.8 626.6 1544.9 639.2C1541.9 651.9 1538.3 664.2 1534.1 676.1C1530.0 688.1 1525.2 699.7 1519.9 711.0C1514.6 722.2 1508.7 733.1 1502.2 743.5C1495.7 753.9 1488.6 763.9 1481.1 773.4C1473.6 782.9 1465.5 792.0 1457.0 800.6C1448.5 809.2 1439.6 817.4 1430.2 825.1C1420.9 832.9 1411.2 840.2 1401.1 847.0C1390.9 853.9 1380.4 860.4 1369.5 866.2C1358.5 872.0 1347.1 877.5 1335.3 881.9C1323.5 886.4 1311.2 890.4 1298.7 893.1C1286.2 895.9 1273.2 897.8 1260.3 898.4C1247.4 899.1 1234.1 898.6 1221.2 896.9C1208.3 895.2 1195.3 892.2 1182.8 888.3C1170.4 884.4 1158.1 879.2 1146.5 873.3C1134.8 867.4 1123.6 860.5 1112.8 853.0C1102.1 845.6 1091.9 837.3 1082.1 828.6C1072.4 820.0 1063.1 810.7 1054.4 800.9C1045.7 791.1 1037.4 780.9 1029.9 770.0C1022.4 759.2 1015.3 747.9 1009.3 736.1C1003.4 724.2 998.1 711.8 994.1 699.1C990.1 686.4 987.0 673.2 985.3 660.0C983.6 646.8 983.1 633.2 983.9 620.0Z" fill="#34496d"/><path d="M1048.5 600.0C1049.1 596.7 1050.3 588.1 1052.1 580.3C1053.9 572.5 1056.4 562.3 1059.4 553.3C1062.4 544.3 1066.3 534.9 1070.2 526.2C1074.1 517.5 1078.6 508.2 1082.8 501.0C1087.0 493.8 1090.0 488.7 1095.4 483.0C1100.8 477.3 1107.5 471.8 1115.3 466.7C1123.1 461.6 1134.8 455.8 1142.3 452.3C1149.8 448.8 1152.6 447.5 1160.0 445.5C1167.4 443.5 1177.3 441.3 1186.5 440.5C1195.7 439.7 1205.8 439.8 1215.4 440.5C1225.0 441.2 1234.6 442.7 1244.2 444.9C1253.8 447.1 1264.5 450.5 1273.1 453.5C1281.7 456.5 1289.4 460.0 1296.0 463.0C1302.6 466.0 1304.3 466.3 1312.5 471.4C1320.7 476.4 1335.2 485.6 1344.9 493.3C1354.6 501.0 1362.8 509.2 1370.9 517.6C1379.0 526.0 1387.1 534.9 1393.6 543.6C1400.1 552.3 1405.2 561.5 1409.8 569.6C1414.4 577.7 1418.0 585.1 1421.2 592.3C1424.4 599.5 1426.5 605.5 1429.0 613.0C1431.5 620.5 1434.4 627.9 1436.3 637.4C1438.2 646.9 1440.5 657.9 1440.4 669.8C1440.3 681.7 1437.4 698.5 1435.5 708.8C1433.6 719.1 1431.7 723.6 1428.9 731.7C1426.1 739.9 1422.4 750.2 1418.8 757.7C1415.2 765.2 1411.5 771.0 1407.2 776.5C1402.9 782.0 1402.3 783.3 1393.0 791.0C1383.7 798.7 1364.0 814.6 1351.3 822.8C1338.6 830.9 1322.7 837.0 1317.0 839.9" fill="none" stroke="#4a6997" stroke-width="84" filter="url(#b12)" opacity=".75"/><path d="M1048.5 600.0C1049.1 596.7 1050.3 588.1 1052.1 580.3C1053.9 572.5 1056.4 562.3 1059.4 553.3C1062.4 544.3 1066.3 534.9 1070.2 526.2C1074.1 517.5 1078.6 508.2 1082.8 501.0C1087.0 493.8 1090.0 488.7 1095.4 483.0C1100.8 477.3 1107.5 471.8 1115.3 466.7C1123.1 461.6 1134.8 455.8 1142.3 452.3C1149.8 448.8 1152.6 447.5 1160.0 445.5C1167.4 443.5 1177.3 441.3 1186.5 440.5C1195.7 439.7 1205.8 439.8 1215.4 440.5C1225.0 441.2 1234.6 442.7 1244.2 444.9C1253.8 447.1 1264.5 450.5 1273.1 453.5C1281.7 456.5 1289.4 460.0 1296.0 463.0C1302.6 466.0 1304.3 466.3 1312.5 471.4C1320.7 476.4 1335.2 485.6 1344.9 493.3C1354.6 501.0 1362.8 509.2 1370.9 517.6C1379.0 526.0 1387.1 534.9 1393.6 543.6C1400.1 552.3 1405.2 561.5 1409.8 569.6C1414.4 577.7 1418.0 585.1 1421.2 592.3C1424.4 599.5 1426.5 605.5 1429.0 613.0C1431.5 620.5 1434.4 627.9 1436.3 637.4C1438.2 646.9 1440.5 657.9 1440.4 669.8C1440.3 681.7 1437.4 698.5 1435.5 708.8C1433.6 719.1 1431.7 723.6 1428.9 731.7C1426.1 739.9 1422.4 750.2 1418.8 757.7C1415.2 765.2 1411.5 771.0 1407.2 776.5C1402.9 782.0 1402.3 783.3 1393.0 791.0C1383.7 798.7 1364.0 814.6 1351.3 822.8C1338.6 830.9 1322.7 837.0 1317.0 839.9" fill="none" stroke="#4f6f9e" stroke-width="40" filter="url(#b7)"/><path d="M1309.3 340.4C1316.3 340.5 1337.2 339.8 1351.3 341.0C1365.5 342.2 1380.0 344.1 1394.1 347.6C1408.2 351.1 1422.6 355.7 1436.0 361.9C1449.4 368.1 1462.6 375.8 1474.4 384.8C1486.2 393.8 1497.4 404.5 1506.8 416.0C1516.2 427.4 1524.4 440.5 1531.0 453.7C1537.6 467.0 1542.7 481.3 1546.4 495.5C1550.1 509.7 1552.2 524.4 1553.4 538.7C1554.6 553.0 1554.4 567.5 1553.6 581.4C1552.8 595.4 1550.8 609.1 1548.4 622.4C1545.9 635.8 1542.7 648.8 1538.9 661.4C1535.1 674.0 1530.7 686.3 1525.7 698.2C1520.6 710.0 1514.9 721.5 1508.7 732.6C1502.4 743.6 1495.5 754.2 1488.0 764.3C1480.6 774.4 1472.5 784.1 1464.1 793.2C1455.6 802.4 1441.7 814.9 1437.2 819.2" fill="none" stroke="#2a3b5b" stroke-width="18" filter="url(#b7)"/></g></g><circle cx="1293.1" cy="598.8" r="81" fill="#4a6590"/><g clip-path="url(#ch)"><rect x="1220" y="530" width="145" height="140" fill="url(#hb)"/><path d="M1276.0 520.0C1276.3 522.5 1276.7 528.9 1278.0 535.0C1279.3 541.1 1280.6 549.1 1283.9 556.4C1287.2 563.7 1292.3 571.9 1297.7 578.7C1303.1 585.6 1309.9 591.9 1316.5 597.5C1323.1 603.1 1330.7 608.0 1337.1 612.1C1343.5 616.2 1349.2 619.4 1355.0 622.4C1360.8 625.4 1369.2 628.7 1372.0 630.0L1375 690L1200 690L1200 520Z" fill="#a60000"/><path d="M1265.0 520.0C1265.3 522.9 1265.6 530.1 1266.8 537.6C1268.0 545.1 1268.8 556.1 1272.0 565.0C1275.2 573.9 1280.0 583.0 1285.7 590.7C1291.4 598.4 1298.8 605.5 1306.2 611.2C1313.6 616.9 1322.8 621.3 1330.2 624.9C1337.6 628.5 1343.8 630.2 1350.8 632.6C1357.8 635.0 1368.5 637.9 1372.0 639.0L1375 690L1200 690L1200 520Z" fill="#1e2a3f"/><path d="M1257.0 530.0C1256.9 533.8 1256.0 544.3 1256.5 553.0C1257.0 561.7 1257.1 573.0 1260.0 582.1C1262.9 591.2 1267.7 600.1 1273.7 607.8C1279.7 615.5 1288.2 622.9 1295.9 628.3C1303.6 633.7 1313.0 638.0 1319.9 640.3C1326.8 642.6 1332.5 642.7 1337.1 642.1C1341.7 641.5 1341.5 639.2 1347.3 636.9C1353.1 634.5 1367.9 629.5 1372.0 628.0L1375 690L1200 690L1200 520Z" fill="#3a4f72"/><path d="M1268.0 526.0C1266.7 528.6 1263.3 533.9 1260.0 541.8C1256.7 549.7 1249.4 563.9 1248.0 573.5C1246.6 583.1 1248.0 590.6 1251.4 599.2C1254.8 607.8 1261.4 618.0 1268.5 624.9C1275.6 631.8 1285.6 636.9 1294.2 640.3C1302.8 643.7 1311.1 646.1 1319.9 645.5C1328.8 644.9 1338.6 640.1 1347.3 636.9C1356.0 633.6 1367.9 627.8 1372.0 626.0L1375 690L1200 690L1200 520Z" fill="url(#rd)"/></g></svg>
<div style="left:1614px;top:114px;width:265px;height:599px;border:1px solid #a9d6e8;border-radius:5px;background:rgba(245,245,245,.5);"></div>
<svg style="left:1627px;top:128.5px;" width="9" height="9" viewBox="0 0 9 9"><rect x=".5" y=".5" width="8" height="8" rx="1.8" fill="url(#tg)" stroke="#8186c8"/><path d="M2.3 4.5h4.4" stroke="#1a1acc" stroke-width="1.3"/></svg>
<span class="t" style="left:1639.1px;top:126px;font-size:11px;line-height:12px;color:#5f9fc2;">Scene</span>
<svg style="left:1643px;top:148px;" width="9" height="9" viewBox="0 0 9 9"><rect x=".5" y=".5" width="8" height="8" rx="1.8" fill="url(#tg)" stroke="#8186c8"/><path d="M2.3 4.5h4.4" stroke="#1a1acc" stroke-width="1.3"/></svg>
<span class="t" style="left:1655px;top:145px;font-size:11px;line-height:12px;color:#5f9fc2;">jet-engine-model-final mesh</span>
<svg style="left:1659px;top:168px;" width="9" height="9" viewBox="0 0 9 9"><rect x=".5" y=".5" width="8" height="8" rx="1.8" fill="url(#tg)" stroke="#8186c8"/><path d="M2.3 4.5h4.4" stroke="#1a1acc" stroke-width="1.3"/><path d="M4.5 2.3v4.4" stroke="#1a1acc" stroke-width="1.3"/></svg>
<svg style="left:1673px;top:167.2px;" width="12" height="8.6" viewBox="0 0 12 8.6"><path d="M0.0 4.3Q6 -3.1000000000000005 12.0 4.3Q6 11.7 0.0 4.3Z" fill="#777"/><circle cx="6" cy="4.3" r="2.7" fill="#fff" opacity=".9"/><circle cx="6" cy="4.3" r="1.9" fill="#777"/></svg>
<span class="t" style="left:1689.1px;top:165px;font-size:11px;line-height:12px;color:#5f9fc2;">volumeOnGeoVolumes_0</span>
<svg style="left:1659px;top:188px;" width="9" height="9" viewBox="0 0 9 9"><rect x=".5" y=".5" width="8" height="8" rx="1.8" fill="url(#tg)" stroke="#8186c8"/><path d="M2.3 4.5h4.4" stroke="#1a1acc" stroke-width="1.3"/><path d="M4.5 2.3v4.4" stroke="#1a1acc" stroke-width="1.3"/></svg>
<svg style="left:1673px;top:187.2px;" width="12" height="8.6" viewBox="0 0 12 8.6"><path d="M0.0 4.3Q6 -3.1000000000000005 12.0 4.3Q6 11.7 0.0 4.3Z" fill="#777"/><circle cx="6" cy="4.3" r="2.7" fill="#fff" opacity=".9"/><circle cx="6" cy="4.3" r="1.9" fill="#777"/></svg>
<span class="t" style="left:1689.1px;top:185px;font-size:11px;line-height:12px;color:#5f9fc2;">volumeOnGeoVolumes_1</span>
<svg style="left:1643px;top:208px;" width="9" height="9" viewBox="0 0 9 9"><rect x=".5" y=".5" width="8" height="8" rx="1.8" fill="url(#tg)" stroke="#8186c8"/><path d="M2.3 4.5h4.4" stroke="#1a1acc" stroke-width="1.3"/></svg>
<span class="t" style="left:1655px;top:205px;font-size:11px;line-height:12px;color:#5f9fc2;">Topological Entity Sets</span>
<span class="t" style="left:1678px;top:228px;font-size:11px;line-height:12px;color:#5f9fc2;">master</span>
<span class="t" style="left:1678px;top:254px;font-size:11px;line-height:12px;color:#5f9fc2;">slave</span>
<span class="t" style="left:1678px;top:280px;font-size:11px;line-height:12px;color:#5f9fc2;">fixation</span>
<span class="t" style="left:1678px;top:306px;font-size:11px;line-height:12px;color:#5f9fc2;">engine-vibration</span>
<svg style="left:1868px;top:703px;" width="9" height="9" viewBox="0 0 9 9"><path d="M8.5 1L1 8.5M8.5 4.5L4.5 8.5" stroke="#666" stroke-width=".8"/></svg>
<div style="left:826px;top:1072px;width:198px;height:26px;border:1px solid #b5dcea;border-radius:4px;background:rgba(255,255,255,.28);"></div>
<span class="t" style="left:834.2px;top:1078.5px;font-size:11px;line-height:12px;color:#9bb9c9;">faceGroupOnGeoFaces_389</span>
<svg style="left:1014px;top:1088px;" width="9" height="9" viewBox="0 0 9 9"><path d="M8.5 1L1 8.5M8.5 4.5L4.5 8.5" stroke="#777" stroke-width=".8"/></svg>
<svg style="left:880px;top:955px;" width="80" height="80" viewBox="0 0 80 80"><path d="M16 70L12.9 36" stroke="#3aa83a" stroke-width="1.6"/><path d="M12.5 30.6l-3.6 6.6 7.4-.6z" fill="#3aa83a"/><path d="M16 70L51 67.8" stroke="#6a6aff" stroke-width="1.6"/><path d="M56 67.5l-6.8-3.4.5 7.2z" fill="#6a6aff"/><path d="M16 70l6-7" stroke="#d01818" stroke-width="1.8"/><path d="M25 58.5l-6 3.2 4.6 4z" fill="#d01818"/></svg>
<span class="t" style="left:885.6px;top:957.6px;font-size:25px;line-height:28px;color:#3cb43c;font-weight:700;font-style:italic;transform:scaleX(0.8689);">Y</span>
<span class="t" style="left:936.8px;top:1004.8px;font-size:25px;line-height:28px;color:#6a6aff;font-weight:700;font-style:italic;transform:scaleX(1.0078);">Z</span>
<span class="t" style="left:899.8px;top:1003px;font-size:15px;line-height:17px;color:#e01a1a;font-weight:700;font-style:italic;transform:scaleX(1.1386);">x</span>
<div style="left:1751px;top:1077px;width:138px;height:34px;background:#02599b;border-radius:3px 3px 0 0;"></div>
<svg style="left:1760px;top:1084px;" width="27" height="20" viewBox="0 0 27 20"><ellipse cx="12.6" cy="9" rx="12.4" ry="8.2" fill="#fff"/><path d="M18 14l7 5.5-3-7.5z" fill="#fff"/><rect x="7" y="5.4" width="11" height="7.6" rx="1" fill="#02599b"/><rect x="10" y="4.2" width="4" height="2" fill="#02599b"/><circle cx="12.7" cy="9.3" r="2.3" fill="#fff"/><circle cx="12.7" cy="9.3" r="1.2" fill="#02599b"/></svg>
<span class="t" style="left:1795.4px;top:1087.6px;font-size:12px;line-height:14px;color:#fff;">Report an issue</span>
<div style="left:818px;top:52px;width:67px;height:22px;border:1px solid #187bad;background:#fff;border-radius:4px;"></div>
<div style="left:840px;top:52px;width:1px;height:22px;background:#187bad;"></div>
<div style="left:862px;top:52px;width:1px;height:22px;background:#187bad;"></div>
<svg style="left:818px;top:52px;" width="67" height="22" viewBox="0 0 67 22"><circle cx="10.8" cy="10.2" r="3.7" fill="none" stroke="#187bad" stroke-width="1.5"/><path d="M13.5 12.899999999999999L16.9 16.299999999999997" stroke="#187bad" stroke-width="1.7"/><path d="M8.8 10.2h4" stroke="#187bad" stroke-width="1"/><path d="M10.8 8.2v4" stroke="#187bad" stroke-width="1"/><circle cx="33.1" cy="10.2" r="3.7" fill="none" stroke="#187bad" stroke-width="1.5"/><path d="M35.800000000000004 12.899999999999999L39.2 16.299999999999997" stroke="#187bad" stroke-width="1.7"/><path d="M31.1 10.2h4" stroke="#187bad" stroke-width="1"/><path d="M51 9.6a4.7 4.7 0 0 1 8.4-2.2" fill="none" stroke="#187bad" stroke-width="1.7"/><path d="M60.7 5v3.9h-3.9z" fill="#187bad"/><path d="M60.4 12a4.7 4.7 0 0 1-8.4 2.2" fill="none" stroke="#187bad" stroke-width="1.7"/><path d="M50.7 16.6v-3.9h3.9z" fill="#187bad"/></svg>
<div style="left:894.5px;top:54px;width:1.4px;height:18px;background:linear-gradient(90deg,#d8a56a,#4a5a8a);opacity:.85;"></div>
<div style="left:906px;top:52px;width:87px;height:22px;border:1px solid #187bad;background:#fff;border-radius:3px;"></div>
<span class="t" style="left:912.5px;top:56.7px;font-size:12px;line-height:14px;color:#187bad;transform:scaleX(1.0425);">Orientation</span>
<svg style="left:979.2px;top:63px;" width="8" height="4" viewBox="0 0 8 4"><path d="M0 0h8l-4.0 4z" fill="#187bad"/></svg>
<div style="left:1003.5px;top:54px;width:1.4px;height:18px;background:linear-gradient(90deg,#d8a56a,#4a5a8a);opacity:.85;"></div>
<div style="left:1012px;top:53px;width:161px;height:22px;border:1px solid #187bad;border-radius:3px;background:#fff;box-shadow:0 0 0 .3px #187bad;"></div>
<span class="t" style="left:1017.1px;top:57px;font-size:13px;line-height:15px;color:#333;">surfaces</span>
<svg style="left:1159.8px;top:61.3px;" width="6.2" height="5.2" viewBox="0 0 6.2 5.2"><path d="M0 0h6.2l-3.1 5.2z" fill="#555"/></svg>
<div style="left:1176px;top:52px;width:93px;height:22px;border:1px solid #187bad;background:#fff;border-radius:4px;"></div>
<div style="left:1199px;top:52px;width:24px;height:22px;background:linear-gradient(#d4d4d4,#e6e6e6);border:1px solid #adadad;"></div>
<div style="left:1245px;top:52px;width:1px;height:22px;background:#187bad;"></div>
<svg style="left:1176px;top:52px;" width="93" height="22" viewBox="0 0 93 22"><path d="M11.5 6.4L6.5 14.1L7.9 17.1L17.1 15.1Z" fill="#f00"/><path d="M11.5 6.4L6.5 14.1L7.9 17.1L17.1 15.1ZM11.5 6.4L7.9 17.1M6.5 14.1L17.1 15.1" fill="none" stroke="#111" stroke-width=".7"/><circle cx="11.5" cy="6.4" r="1" fill="#111"/><circle cx="6.5" cy="14.1" r="1" fill="#111"/><circle cx="7.9" cy="17.1" r="1" fill="#111"/><circle cx="17.1" cy="15.1" r="1" fill="#111"/><path d="M34.5 6.4L30.9 17.1L35.9 16.0Z" fill="#f00"/><path d="M34.5 6.4L29.5 14.1L30.9 17.1L40.1 15.1ZM34.5 6.4L30.9 17.1M29.5 14.1L40.1 15.1" fill="none" stroke="#111" stroke-width=".7"/><circle cx="34.5" cy="6.4" r="1" fill="#111"/><circle cx="29.5" cy="14.1" r="1" fill="#111"/><circle cx="30.9" cy="17.1" r="1" fill="#111"/><circle cx="40.1" cy="15.1" r="1" fill="#111"/><path d="M57.4 6.4L52.4 14.1L53.8 17.1L63.0 15.1ZM57.4 6.4L53.8 17.1M52.4 14.1L63.0 15.1" fill="none" stroke="#111" stroke-width=".7"/><path d="M56.9 7.9L54.2 15.6" stroke="#f00" stroke-width="1.1"/><circle cx="57.4" cy="6.4" r="1" fill="#111"/><circle cx="52.4" cy="14.1" r="1" fill="#111"/><circle cx="53.8" cy="17.1" r="1" fill="#111"/><circle cx="63.0" cy="15.1" r="1" fill="#111"/><path d="M80.3 6.4L75.3 14.1L76.7 17.1L85.9 15.1ZM80.3 6.4L76.7 17.1M75.3 14.1L85.9 15.1" fill="none" stroke="#111" stroke-width=".7"/><circle cx="75.3" cy="14.1" r="1" fill="#111"/><circle cx="76.7" cy="17.1" r="1" fill="#111"/><circle cx="85.9" cy="15.1" r="1" fill="#111"/><circle cx="80.3" cy="8.2" r="2.6" fill="#f00"/></svg>
<div style="left:1278.8px;top:54px;width:1.4px;height:18px;background:linear-gradient(90deg,#d8a56a,#4a5a8a);opacity:.85;"></div>
<div style="left:1290px;top:52px;width:74px;height:22px;border:1px solid #187bad;background:#fff;border-radius:3px;"></div>
<span class="t" style="left:1296.4px;top:56.7px;font-size:12px;line-height:14px;color:#187bad;transform:scaleX(0.9661);">Selection</span>
<svg style="left:1350.7px;top:63px;" width="7.4" height="4" viewBox="0 0 7.4 4"><path d="M0 0h7.4l-3.7 4z" fill="#187bad"/></svg>
<div style="left:1370px;top:52px;width:47px;height:22px;border:1px solid #187bad;background:#fff;border-radius:3px;"></div>
<div style="left:1393px;top:52px;width:1px;height:22px;background:#187bad;"></div>
<svg style="left:1370px;top:52px;" width="47" height="22" viewBox="0 0 47 22"><path d="M6.050000000000001 10.7Q11.8 4.199999999999999 17.55 10.7Q11.8 17.2 6.050000000000001 10.7Z" fill="#187bad"/><circle cx="11.8" cy="10.7" r="2.7" fill="#fff" opacity=".9"/><circle cx="11.8" cy="10.7" r="1.9" fill="#187bad"/><path d="M14.4 5.499999999999999L9.200000000000001 15.899999999999999" stroke="#fff" stroke-width="2.4"/><path d="M14.0 5.499999999999999L8.8 15.899999999999999" stroke="#187bad" stroke-width="1.1"/><path d="M29.450000000000003 10.7Q35.2 4.199999999999999 40.95 10.7Q35.2 17.2 29.450000000000003 10.7Z" fill="#187bad"/><circle cx="35.2" cy="10.7" r="2.7" fill="#fff" opacity=".9"/><circle cx="35.2" cy="10.7" r="1.9" fill="#187bad"/></svg>
<div style="left:1427.8px;top:54px;width:1.4px;height:18px;background:linear-gradient(90deg,#d8a56a,#4a5a8a);opacity:.85;"></div>
<div style="left:1436px;top:52px;width:66px;height:22px;border:1px solid #187bad;background:#fff;border-radius:3px;"></div>
<span class="t" style="left:1442.6px;top:56.7px;font-size:12px;line-height:14px;color:#187bad;transform:scaleX(0.9646);">Create set</span>
<div style="left:1506px;top:52px;width:54px;height:22px;border:1px solid #187bad;background:#fff;border-radius:3px;"></div>
<span class="t" style="left:1512.6px;top:56.7px;font-size:12px;line-height:14px;color:#187bad;transform:scaleX(1.0385);">Filter</span>
<svg style="left:1546.5px;top:63px;" width="7.4" height="4" viewBox="0 0 7.4 4"><path d="M0 0h7.4l-3.7 4z" fill="#187bad"/></svg>
<div style="left:-3px;top:56px;width:118px;height:27px;border:1px solid #187bad;border-radius:3px;background:#fff;"></div>
<svg style="left:10px;top:64.5px;" width="9.6" height="9.6" viewBox="0 0 9.6 9.6"><path d="M4.8 0v9.6M0 4.8h9.6" stroke="#187bad" stroke-width="2.4"/></svg>
<span class="t" style="left:22.5px;top:62.8px;font-size:12px;line-height:14px;color:#187bad;transform:scaleX(0.9929);">New simulation</span>
<div style="left:0px;top:91px;width:319px;height:1px;background:#e7e7e7;"></div>
<svg style="left:3px;top:107px;" width="9" height="9" viewBox="0 0 9 9"><rect x=".5" y=".5" width="8" height="8" rx="1.8" fill="url(#tg)" stroke="#8186c8"/><path d="M2.3 4.5h4.4" stroke="#1a1acc" stroke-width="1.3"/></svg>
<span class="t" style="left:18.7px;top:103px;font-size:13px;line-height:15px;color:#222;">Simulations</span>
<svg style="left:19px;top:125px;" width="9" height="9" viewBox="0 0 9 9"><rect x=".5" y=".5" width="8" height="8" rx="1.8" fill="url(#tg)" stroke="#8186c8"/><path d="M2.3 4.5h4.4" stroke="#1a1acc" stroke-width="1.3"/><path d="M4.5 2.3v4.4" stroke="#1a1acc" stroke-width="1.3"/></svg>
<span class="t" style="left:34.9px;top:121px;font-size:13px;line-height:15px;color:#222;">Frequency analysis</span>
<svg style="left:19px;top:143px;" width="9" height="9" viewBox="0 0 9 9"><rect x=".5" y=".5" width="8" height="8" rx="1.8" fill="url(#tg)" stroke="#8186c8"/><path d="M2.3 4.5h4.4" stroke="#1a1acc" stroke-width="1.3"/></svg>
<span class="t" style="left:34.9px;top:139px;font-size:13px;line-height:15px;color:#222;">Vibration analysis - 1 missing blade</span>
<svg style="left:34.9px;top:162px;" width="11.4" height="11.4" viewBox="0 0 12 12"><circle cx="6" cy="6" r="6" fill="#0a7a0a"/><path d="M3 6.1l2.2 2.2 3.9-4" fill="none" stroke="#fff" stroke-width="1.9"/></svg>
<span class="t" style="left:50px;top:160px;font-size:13px;line-height:15px;color:#222;">Analysis Type</span>
<svg style="left:35px;top:185px;" width="9" height="9" viewBox="0 0 9 9"><rect x=".5" y=".5" width="8" height="8" rx="1.8" fill="url(#tg)" stroke="#8186c8"/><path d="M2.3 4.5h4.4" stroke="#1a1acc" stroke-width="1.3"/></svg>
<span class="t" style="left:50.7px;top:181px;font-size:13px;line-height:15px;color:#222;">Domain</span>
<svg style="left:51.1px;top:203.9px;" width="11.4" height="11.4" viewBox="0 0 12 12"><circle cx="6" cy="6" r="6" fill="#187bad"/></svg>
<span class="t" style="left:66.3px;top:202px;font-size:13px;line-height:15px;color:#222;">Geometry Primitives</span>
<svg style="left:51.1px;top:227.8px;" width="11.4" height="11.4" viewBox="0 0 12 12"><circle cx="6" cy="6" r="6" fill="#0a7a0a"/><path d="M3 6.1l2.2 2.2 3.9-4" fill="none" stroke="#fff" stroke-width="1.9"/></svg>
<span class="t" style="left:66.3px;top:226px;font-size:13px;line-height:15px;color:#222;">Topological Entity Sets</span>
<svg style="left:52px;top:250px;" width="9" height="9" viewBox="0 0 9 9"><rect x=".5" y=".5" width="8" height="8" rx="1.8" fill="url(#tg)" stroke="#8186c8"/><path d="M2.3 4.5h4.4" stroke="#1a1acc" stroke-width="1.3"/></svg>
<span class="t" style="left:67.9px;top:246px;font-size:13px;line-height:15px;color:#222;">Contacts</span>
<svg style="left:67.9px;top:268.7px;" width="11.4" height="11.4" viewBox="0 0 12 12"><circle cx="6" cy="6" r="6" fill="#0a7a0a"/><path d="M3 6.1l2.2 2.2 3.9-4" fill="none" stroke="#fff" stroke-width="1.9"/></svg>
<span class="t" style="left:83.2px;top:267px;font-size:13px;line-height:15px;color:#222;">Bonded contact</span>
<svg style="left:51px;top:291px;" width="9" height="9" viewBox="0 0 9 9"><rect x=".5" y=".5" width="8" height="8" rx="1.8" fill="url(#tg)" stroke="#8186c8"/><path d="M2.3 4.5h4.4" stroke="#1a1acc" stroke-width="1.3"/><path d="M4.5 2.3v4.4" stroke="#1a1acc" stroke-width="1.3"/></svg>
<span class="t" style="left:67px;top:287px;font-size:13px;line-height:15px;color:#222;">Mesh</span>
<svg style="left:35px;top:309px;" width="9" height="9" viewBox="0 0 9 9"><rect x=".5" y=".5" width="8" height="8" rx="1.8" fill="url(#tg)" stroke="#8186c8"/><path d="M2.3 4.5h4.4" stroke="#1a1acc" stroke-width="1.3"/></svg>
<svg style="left:46.8px;top:307px;" width="11.4" height="11.4" viewBox="0 0 12 12"><circle cx="6" cy="6" r="6" fill="#0a7a0a"/><path d="M3 6.1l2.2 2.2 3.9-4" fill="none" stroke="#fff" stroke-width="1.9"/></svg>
<span class="t" style="left:62.2px;top:305px;font-size:13px;line-height:15px;color:#222;">Model</span>
<svg style="left:51px;top:327px;" width="9" height="9" viewBox="0 0 9 9"><rect x=".5" y=".5" width="8" height="8" rx="1.8" fill="url(#tg)" stroke="#8186c8"/><path d="M2.3 4.5h4.4" stroke="#1a1acc" stroke-width="1.3"/></svg>
<span class="t" style="left:67px;top:323px;font-size:13px;line-height:15px;color:#222;">Materials</span>
<svg style="left:67px;top:345.8px;" width="11.4" height="11.4" viewBox="0 0 12 12"><circle cx="6" cy="6" r="6" fill="#0a7a0a"/><path d="M3 6.1l2.2 2.2 3.9-4" fill="none" stroke="#fff" stroke-width="1.9"/></svg>
<span class="t" style="left:82.1px;top:344px;font-size:13px;line-height:15px;color:#222;">Aluminum</span>
<svg style="left:51px;top:369px;" width="9" height="9" viewBox="0 0 9 9"><rect x=".5" y=".5" width="8" height="8" rx="1.8" fill="url(#tg)" stroke="#8186c8"/><path d="M2.3 4.5h4.4" stroke="#1a1acc" stroke-width="1.3"/></svg>
<span class="t" style="left:67px;top:365px;font-size:13px;line-height:15px;color:#222;">Boundary Conditions</span>
<svg style="left:67px;top:387px;" width="9" height="9" viewBox="0 0 9 9"><rect x=".5" y=".5" width="8" height="8" rx="1.8" fill="url(#tg)" stroke="#8186c8"/><path d="M2.3 4.5h4.4" stroke="#1a1acc" stroke-width="1.3"/></svg>
<span class="t" style="left:82.8px;top:383px;font-size:13px;line-height:15px;color:#222;">Constraints</span>
<svg style="left:82.8px;top:405.8px;" width="11.4" height="11.4" viewBox="0 0 12 12"><circle cx="6" cy="6" r="6" fill="#0a7a0a"/><path d="M3 6.1l2.2 2.2 3.9-4" fill="none" stroke="#fff" stroke-width="1.9"/></svg>
<span class="t" style="left:98.1px;top:404px;font-size:13px;line-height:15px;color:#222;">fixation</span>
<svg style="left:67px;top:429px;" width="9" height="9" viewBox="0 0 9 9"><rect x=".5" y=".5" width="8" height="8" rx="1.8" fill="url(#tg)" stroke="#8186c8"/><path d="M2.3 4.5h4.4" stroke="#1a1acc" stroke-width="1.3"/></svg>
<span class="t" style="left:82.8px;top:425px;font-size:13px;line-height:15px;color:#222;">Loads</span>
<svg style="left:82.8px;top:447.8px;" width="11.4" height="11.4" viewBox="0 0 12 12"><circle cx="6" cy="6" r="6" fill="#0a7a0a"/><path d="M3 6.1l2.2 2.2 3.9-4" fill="none" stroke="#fff" stroke-width="1.9"/></svg>
<span class="t" style="left:98.1px;top:446px;font-size:13px;line-height:15px;color:#222;">Jet engine load - Fy</span>
<svg style="left:34.9px;top:496px;" width="11.4" height="11.4" viewBox="0 0 12 12"><circle cx="6" cy="6" r="6" fill="#0a7a0a"/><path d="M3 6.1l2.2 2.2 3.9-4" fill="none" stroke="#fff" stroke-width="1.9"/></svg>
<span class="t" style="left:50px;top:494px;font-size:13px;line-height:15px;color:#222;">Numerics</span>
<svg style="left:34.9px;top:520px;" width="11.4" height="11.4" viewBox="0 0 12 12"><circle cx="6" cy="6" r="6" fill="#0a7a0a"/><path d="M3 6.1l2.2 2.2 3.9-4" fill="none" stroke="#fff" stroke-width="1.9"/></svg>
<span class="t" style="left:50px;top:518px;font-size:13px;line-height:15px;color:#222;">Simulation Control</span>
<svg style="left:35px;top:543px;" width="9" height="9" viewBox="0 0 9 9"><rect x=".5" y=".5" width="8" height="8" rx="1.8" fill="url(#tg)" stroke="#8186c8"/><path d="M2.3 4.5h4.4" stroke="#1a1acc" stroke-width="1.3"/><path d="M4.5 2.3v4.4" stroke="#1a1acc" stroke-width="1.3"/></svg>
<span class="t" style="left:50.7px;top:539px;font-size:13px;line-height:15px;color:#222;">Result Control</span>
<svg style="left:34.9px;top:561.8px;" width="11.4" height="11.4" viewBox="0 0 12 12"><circle cx="6" cy="6" r="5" fill="#fff" stroke="url(#rg)" stroke-width="1.9"/></svg>
<span class="t" style="left:50px;top:560px;font-size:13px;line-height:15px;color:#222;">Simulation Runs</span>
<svg style="left:82.8px;top:471.7px;" width="11.4" height="11.4" viewBox="0 0 12 12"><circle cx="6" cy="6" r="5" fill="#fff" stroke="url(#rg)" stroke-width="1.9"/></svg>
<span class="t" style="left:94.5px;top:470px;font-size:13px;line-height:15px;color:#187bad;font-weight:700;text-decoration:underline;">&nbsp;Boundary Condition 2</span>
<div style="left:75px;top:463px;width:165px;height:30px;border:2px solid #f00;"></div>
<div style="left:-1px;top:911px;width:320px;height:200px;border:1px solid #ddd;border-radius:4px;background:#fff;"></div>
<div style="left:0px;top:912px;width:318px;height:38px;background:#f5f5f5;border-bottom:1px solid #ddd;border-radius:3px 3px 0 0;"></div>
<span class="t" style="left:15.8px;top:922px;font-size:14px;line-height:16px;color:#187bad;transform:scaleX(0.8782);">Job Status</span>
<div style="left:0px;top:950px;width:316px;height:159px;border-left:1px solid #ddd;border-right:1px solid #ddd;background:#fff;"></div>
<div style="left:1px;top:950px;width:314px;height:26px;background:#ebebeb;"></div>
<span class="t" style="left:16.3px;top:955px;font-size:13px;line-height:15px;color:#444;font-weight:700;">Name</span>
<span class="t" style="left:140.2px;top:955px;font-size:13px;line-height:15px;color:#444;font-weight:700;">Status</span>
<div style="left:1px;top:1010px;width:314px;height:1px;background:#ddd;"></div>
<span class="t" style="left:16.3px;top:985px;font-size:13px;line-height:15px;color:#222;">Final run - freq</span>
<div style="left:140px;top:983px;width:94px;height:20px;background:#f5f5f5;border-radius:4px;box-shadow:inset 0 1px 2px rgba(0,0,0,.1);overflow:hidden;"><div style="left:0;top:0;width:47px;height:20px;background-color:#337ab7;background-image:linear-gradient(45deg,rgba(255,255,255,.15) 25%,transparent 25%,transparent 50%,rgba(255,255,255,.15) 50%,rgba(255,255,255,.15) 75%,transparent 75%,transparent);background-size:40px 40px;"></div></div>
<span class="t" style="left:141px;top:986px;font-size:12px;line-height:14px;color:#4a4a4a;">Computing</span>
<div style="left:249px;top:983px;width:22px;height:19px;border:1px solid #187bad;border-radius:3px;background:#fff;"></div>
<div style="left:255px;top:987.4px;width:10.7px;height:10.3px;background:#187bad;"></div>
<div style="left:275px;top:983px;width:21px;height:19px;border:1px solid #187bad;border-radius:3px;background:#fff;"></div>
<svg style="left:280.6px;top:987px;" width="9.6" height="11.0" viewBox="0 0 9.6 11"><path d="M0 1.6h9.6v1.3H0zM3.2 0h3.2v1.6H3.2z" fill="#187bad"/><path d="M.9 3.2h7.8l-.5 7a.9.9 0 0 1-.9.8H2.3a.9.9 0 0 1-.9-.8z" fill="#187bad"/><path d="M3.3 4.6v4.8M4.8 4.6v4.8M6.3 4.6v4.8" stroke="#fff" stroke-width=".7"/></svg>
<div style="left:319px;top:49px;width:4px;height:1060px;background:#e6e6e6;"></div>
<div style="left:319.6px;top:574px;width:1px;height:9px;background:#555;"></div>
<div style="left:321.6px;top:574px;width:1px;height:9px;background:#555;"></div>
<span class="t" style="left:337.4px;top:59px;font-size:20.3px;line-height:22px;color:#222;transform:scaleX(1.0373);">Boundary Condition</span>
<div style="left:726px;top:49px;width:69px;height:38px;border:2px solid #f00;"></div>
<div style="left:733px;top:56px;width:59px;height:27px;background:#187bad;border-radius:3px;"></div>
<svg style="left:743.7px;top:64.6px;" width="10" height="10" viewBox="0 0 10 10"><path d="M.6.6h6.6l2.2 2.2v6.6H.6z" fill="none" stroke="#fff" stroke-width="1.2"/><path d="M2.6.8v2.8h3.6V.8M2.3 9.3V6.2h5.4v3.1" fill="none" stroke="#fff" stroke-width="1.1"/></svg>
<span class="t" style="left:756.8px;top:62.8px;font-size:12px;line-height:14px;color:#fff;-webkit-text-stroke:.2px #fff;transform:scaleX(0.8918);">Save</span>
<div style="left:327px;top:91px;width:480px;height:1px;background:#e7e7e7;"></div>
<span class="t" style="left:337.6px;top:109px;font-size:13px;line-height:15px;color:#222;transform:scaleX(0.9427);">Name</span>
<span class="t" style="left:337.2px;top:147.8px;font-size:13px;line-height:15px;color:#222;transform:scaleX(0.9508);">Type</span>
<div style="left:580px;top:107px;width:212px;height:34px;border:1px solid #ccc;border-radius:4px;background:#fff;box-shadow:inset 0 1px 1px rgba(0,0,0,.075);"></div>
<span class="t" style="left:592.5px;top:117px;font-size:13px;line-height:15px;color:#555;">Jet Engine load - Fz</span>
<div style="left:580px;top:146px;width:212px;height:34px;border:1px solid #ccc;border-radius:4px;background:#fff;box-shadow:inset 0 1px 1px rgba(0,0,0,.075);"></div>
<span class="t" style="left:596.8px;top:156px;font-size:13px;line-height:15px;color:#555;">Force</span>
<svg style="left:779.2px;top:160.3px;" width="6" height="5" viewBox="0 0 6 5"><path d="M0 0h6l-3.0 5z" fill="#555"/></svg>
<div style="left:572px;top:98px;width:228px;height:88px;border:2px solid #f00;"></div>
<svg style="left:340px;top:190.2px;" width="11.2" height="10" viewBox="0 0 11.2 10"><path d="M0 0h11.2l-5.6 10z" fill="#666"/></svg>
<span class="t" style="left:353.8px;top:185.7px;font-size:13px;line-height:15px;color:#111;font-style:italic;">Details</span>
<div style="left:343px;top:203px;width:449px;height:384px;border-left:3px solid #e2e2e2;border-top:1px solid #e8e8e8;border-right:1px solid #efefef;border-bottom:1px solid #e5e5e5;background:#fcfcfc;"></div>
<span class="t" style="left:354px;top:210px;font-size:13px;line-height:15px;color:#222;transform:scaleX(1.0534);">f<span style="font-size:9.75px;position:relative;top:2px;">x</span>&thinsp;[N]</span>
<span class="t" style="left:354px;top:249px;font-size:13px;line-height:15px;color:#222;transform:scaleX(1.0534);">f<span style="font-size:9.75px;position:relative;top:2px;">y</span>&thinsp;[N]</span>
<span class="t" style="left:354px;top:288px;font-size:13px;line-height:15px;color:#222;transform:scaleX(1.0390);">f<span style="font-size:9.75px;position:relative;top:2px;">z</span>&thinsp;[N]</span>
<span class="t" style="left:354px;top:327.5px;font-size:13px;line-height:15px;color:#222;transform:scaleX(0.9475);">Scaling</span>
<div style="left:588px;top:208px;width:203px;height:34px;border:1px solid #ccc;border-radius:4px;background:#fff;box-shadow:inset 0 1px 1px rgba(0,0,0,.075);"></div>
<span class="t" style="left:600.8px;top:218px;font-size:13px;line-height:15px;color:#555;">0</span>
<div style="left:588px;top:247px;width:203px;height:34px;border:1px solid #ccc;border-radius:4px;background:#fff;box-shadow:inset 0 1px 1px rgba(0,0,0,.075);"></div>
<span class="t" style="left:600.8px;top:257px;font-size:13px;line-height:15px;color:#555;">0</span>
<div style="left:588px;top:286px;width:203px;height:34px;border:1px solid #ccc;border-radius:4px;background:#fff;box-shadow:inset 0 1px 1px rgba(0,0,0,.075);"></div>
<span class="t" style="left:600.8px;top:296px;font-size:13px;line-height:15px;color:#555;">1</span>
<div style="left:588px;top:325px;width:203px;height:34px;border:1px solid #ccc;border-radius:4px;background:#eee;box-shadow:inset 0 1px 1px rgba(0,0,0,.075);"></div>
<span class="t" style="left:600.8px;top:335px;font-size:13px;line-height:15px;color:#555;">1</span>
<div style="left:574px;top:280px;width:226px;height:43px;border:2px solid #f00;"></div>
<div style="left:588px;top:360px;width:22px;height:19px;border:1px solid #187bad;border-radius:3px 0 0 3px;background:#fff;"></div>
<svg style="left:593.4px;top:365px;" width="11" height="9" viewBox="0 0 11 9"><rect x=".5" y=".5" width="10" height="8" fill="#fff" stroke="#333"/><path d="M.5 3.2h10M.5 5.9h10M3.9.5v8M7.2.5v8" stroke="#333" stroke-width=".9"/><rect x=".5" y=".5" width="10" height="1.6" fill="#333"/></svg>
<div style="left:610px;top:360px;width:28px;height:19px;background:#31a8cf;border:1px solid #269abc;border-radius:0 3px 3px 0;"></div>
<span class="t" style="left:616.3px;top:363px;font-size:12px;line-height:14px;color:#fff;transform:scaleX(0.8887);">f(x)</span>
<div style="left:608px;top:357px;width:33px;height:27px;border:2px solid #f00;"></div>
<svg style="left:357.3px;top:399.3px;" width="10.4" height="9.5" viewBox="0 0 10.4 9.5"><path d="M0 0h10.4l-5.2 9.5z" fill="#666"/></svg>
<span class="t" style="left:371px;top:395px;font-size:13px;line-height:15px;color:#111;font-style:italic;">Define the value via a function</span>
<div style="left:360px;top:412px;width:432px;height:116px;border-left:3px solid #e4e4e4;border-top:1px solid #ececec;border-bottom:1px solid #e6e6e6;background:#f6f6f6;"></div>
<span class="t" style="left:371.2px;top:430px;font-size:15.5px;line-height:17px;color:#444;transform:scaleX(1.0311);">Function</span>
<div style="left:371px;top:459px;width:62px;height:1px;background:#e3e3e3;"></div>
<span class="t" style="left:371.2px;top:461.7px;font-size:13px;line-height:15px;color:#222;transform:scaleX(0.9747);">Parameters</span>
<span class="t" style="left:371.2px;top:485.7px;font-size:13px;line-height:15px;color:#222;transform:scaleX(0.9772);">Formula</span>
<div style="left:596px;top:460px;width:43px;height:19px;border:1px solid #187bad;border-radius:3px;background:#fff;"></div>
<span class="t" style="left:602.1px;top:462.4px;font-size:12px;line-height:14px;color:#187bad;transform:scaleX(0.9087);">FREQ</span>
<div style="left:596px;top:484px;width:194px;height:34px;border:1px solid #ccc;border-radius:4px;background:#fff;box-shadow:inset 0 1px 1px rgba(0,0,0,.075);"></div>
<span class="t" style="left:608.6px;top:494px;font-size:13px;line-height:15px;color:#555;">7.65*(5e-3)*4*(pi^2)*(f^2)</span>
<div style="left:588px;top:476px;width:208px;height:47px;border:2px solid #f00;"></div>
<span class="t" style="left:354.3px;top:544.7px;font-size:13px;line-height:15px;color:#222;transform:scaleX(0.9329);">Phase angle [&deg;]</span>
<div style="left:588px;top:543px;width:203px;height:34px;border:1px solid #ccc;border-radius:4px;background:#fff;box-shadow:inset 0 1px 1px rgba(0,0,0,.075);"></div>
<span class="t" style="left:600.3px;top:552.6px;font-size:13px;line-height:15px;color:#555;">90</span>
<div style="left:580px;top:537px;width:218px;height:48px;border:2px solid #f00;"></div>
<span class="t" style="left:337.5px;top:618.6px;font-size:17.6px;line-height:20px;color:#187bad;transform:scaleX(1.0074);">Topological Mapping</span>
<span class="t" style="left:337.5px;top:655.6px;font-size:13px;line-height:15px;color:#222;transform:scaleX(1.0218);">Filter for entity types</span>
<div style="left:580px;top:654px;width:212px;height:34px;border:1px solid #ccc;border-radius:4px;background:#fff;box-shadow:inset 0 1px 1px rgba(0,0,0,.075);"></div>
<span class="t" style="left:596.7px;top:663.7px;font-size:13px;line-height:15px;color:#555;">face sets</span>
<svg style="left:779.1px;top:668.3px;" width="6" height="5" viewBox="0 0 6 5"><path d="M0 0h6l-3.0 5z" fill="#555"/></svg>
<div style="left:337px;top:713px;width:455px;height:249px;border:1px solid #ddd;background:#fff;"></div>
<div style="left:338px;top:714px;width:453px;height:25px;background:#ebebeb;"></div>
<svg style="left:353.4px;top:722.4px;" width="10" height="6.8" viewBox="0 0 10 6.8"><path d="M0 0h10l-5 6.8z" fill="#666e80"/></svg>
<span class="t" style="left:370.5px;top:718px;font-size:13px;line-height:15px;color:#444;font-weight:700;">Assigned</span>
<span class="t" style="left:466.5px;top:718px;font-size:13px;line-height:15px;color:#444;font-weight:700;">Entity/Assignment</span>
<div style="left:338px;top:739px;width:453px;height:35px;background:#fffff0;border-bottom:1px solid #e4e4e4;"></div>
<svg style="left:353px;top:749.5px;" width="12" height="12" viewBox="0 0 12 12"><rect x=".5" y=".5" width="11" height="11" rx="2" fill="url(#cb)" stroke="#9a9a9a"/><path d="M2.6 6.2l2.3 2.5 4.6-5.9" fill="none" stroke="#222" stroke-width="2"/></svg>
<span class="t" style="left:444px;top:747.6px;font-size:13px;line-height:15px;color:#222;">engine-vibration</span>
<div style="left:338px;top:774px;width:453px;height:35px;background:#f3f6fb;border-bottom:1px solid #e4e4e4;"></div>
<svg style="left:353px;top:784.5px;" width="12" height="12" viewBox="0 0 12 12"><rect x=".5" y=".5" width="11" height="11" rx="2" fill="url(#cb)" stroke="#9a9a9a"/></svg>
<span class="t" style="left:444px;top:782.6px;font-size:13px;line-height:15px;color:#222;">master</span>
<div style="left:338px;top:809px;width:453px;height:35px;background:#fff;border-bottom:1px solid #e4e4e4;"></div>
<svg style="left:353px;top:819.5px;" width="12" height="12" viewBox="0 0 12 12"><rect x=".5" y=".5" width="11" height="11" rx="2" fill="url(#cb)" stroke="#9a9a9a"/></svg>
<span class="t" style="left:444px;top:817.6px;font-size:13px;line-height:15px;color:#222;">slave</span>
<div style="left:338px;top:844px;width:453px;height:35px;background:#f3f6fb;border-bottom:1px solid #e4e4e4;"></div>
<svg style="left:353px;top:854.5px;" width="12" height="12" viewBox="0 0 12 12"><rect x=".5" y=".5" width="11" height="11" rx="2" fill="url(#cb)" stroke="#9a9a9a"/></svg>
<span class="t" style="left:444px;top:852.6px;font-size:13px;line-height:15px;color:#222;">fixation</span>
<div style="left:342px;top:733px;width:324px;height:44px;border:2px solid #f00;"></div>
<div style="left:337px;top:983px;width:455px;height:1px;background:#e7e7e7;"></div>
<div style="left:337px;top:994px;width:161px;height:19px;background:#93d4e8;border-radius:3px;"></div>
<svg style="left:343.2px;top:998.6px;" width="10" height="10" viewBox="0 0 10 10"><path d="M9.8 5H1.8M5.6 .9L1.5 5l4.1 4.1" fill="none" stroke="#6db5d2" stroke-width="2.2"/></svg>
<span class="t" style="left:356.3px;top:997.1px;font-size:12px;line-height:14px;color:#6db5d2;-webkit-text-stroke:.2px #6db5d2;transform:scaleX(0.9855);">Add selection from viewer</span>
<div style="left:501.5px;top:993.5px;width:118.5px;height:20px;background:#31a8cf;border:1px solid #2a8fd0;border-radius:3px;box-shadow:0 0 2px 1px rgba(70,130,230,.8);"></div>
<svg style="left:507.4px;top:998.6px;" width="10" height="10" viewBox="0 0 10 10"><path d="M.2 5h8M4.4 .9L8.5 5 4.4 9.1" fill="none" stroke="#fff" stroke-width="2.2"/></svg>
<span class="t" style="left:520.8px;top:997.1px;font-size:12px;line-height:14px;color:#fff;-webkit-text-stroke:.2px #fff;transform:scaleX(0.9525);">Select assignment</span>
<div style="left:495px;top:986px;width:128px;height:34px;border:2px solid #f00;"></div>
<div style="left:623px;top:994px;width:52.8px;height:19px;border:1px solid #187bad;border-radius:3px;background:#fff;"></div>
<svg style="left:629.8px;top:998px;" width="8.928" height="10.23" viewBox="0 0 9.6 11"><path d="M0 1.6h9.6v1.3H0zM3.2 0h3.2v1.6H3.2z" fill="#187bad"/><path d="M.9 3.2h7.8l-.5 7a.9.9 0 0 1-.9.8H2.3a.9.9 0 0 1-.9-.8z" fill="#187bad"/><path d="M3.3 4.6v4.8M4.8 4.6v4.8M6.3 4.6v4.8" stroke="#fff" stroke-width=".7"/></svg>
<span class="t" style="left:641.4px;top:997.1px;font-size:12px;line-height:14px;color:#187bad;-webkit-text-stroke:.2px #187bad;transform:scaleX(0.9691);">Clear</span>
<div style="left:807px;top:49px;width:4px;height:1060px;background:#e6e6e6;"></div>
<div style="left:807.6px;top:574px;width:1px;height:9px;background:#555;"></div>
<div style="left:809.6px;top:574px;width:1px;height:9px;background:#555;"></div>
<div style="left:-1px;top:-1px;width:1921px;height:50px;border:1px solid #e7e7e7;border-radius:5px;background:#fff;"></div>
<svg style="left:7px;top:7px;" width="32" height="32" viewBox="0 0 32 32"><defs><clipPath id="lg"><path d="M3.5 0H32V28a4 4 0 0 1-4 4H0V3.5A3.5 3.5 0 0 1 3.5 0z"/></clipPath></defs><g clip-path="url(#lg)"><rect width="32" height="32" fill="#3b3735"/><path d="M-1 21.6C7 19 14 14.6 19 9.6C21.7 6.7 23.6 3.4 25 -1L33 -1V6.6C27 11 21 16 14.4 20.8C9 23.6 4 25.3 -1 26.4z" fill="#0e76a8" stroke="#fff" stroke-width="1.5"/><path d="M-1 30.5C8 29.9 14 28.1 21.2 25.1C25 23.4 29 21.3 33 18.7" fill="none" stroke="#fff" stroke-width="1.3"/></g></svg>
<svg style="left:56px;top:10px;" width="18" height="22" viewBox="0 0 18 22"><path d="M3.6 11V7.4a5.4 5.4 0 0 1 10.8 0V11" fill="none" stroke="#187bad" stroke-width="2.9"/><rect x="0" y="10.2" width="18" height="11.8" rx="1.5" fill="#187bad"/></svg>
<span class="t" style="left:81.5px;top:12px;font-size:20px;line-height:22px;color:#187bad;transform:scaleX(0.9731);">Jet engine vibration analysis</span>
<svg style="left:371px;top:15.2px;" width="18" height="14" viewBox="0 0 18 14"><rect x="0.0" y="0.0" width="5.2" height="3.9" rx=".7" fill="#3a3633"/><rect x="6.3" y="0.0" width="5.2" height="3.9" rx=".7" fill="#3a3633"/><rect x="12.6" y="0.0" width="5.2" height="3.9" rx=".7" fill="#3a3633"/><rect x="0.0" y="4.9" width="5.2" height="3.9" rx=".7" fill="#3a3633"/><rect x="6.3" y="4.9" width="5.2" height="3.9" rx=".7" fill="#3a3633"/><rect x="12.6" y="4.9" width="5.2" height="3.9" rx=".7" fill="#3a3633"/><rect x="0.0" y="9.8" width="5.2" height="3.9" rx=".7" fill="#3a3633"/><rect x="6.3" y="9.8" width="5.2" height="3.9" rx=".7" fill="#3a3633"/><rect x="12.6" y="9.8" width="5.2" height="3.9" rx=".7" fill="#3a3633"/></svg>
<span class="t" style="left:396.7px;top:14px;font-size:14px;line-height:16px;color:#333;transform:scaleX(0.9209);">Mesh Creator</span>
<svg style="left:497px;top:14px;" width="19" height="17" viewBox="0 0 19 17"><path d="M12.56 7.81 L12.56 9.19 L10.88 9.56 L10.29 10.99 L11.22 12.44 L10.24 13.42 L8.79 12.49 L7.36 13.08 L6.99 14.76 L5.61 14.76 L5.24 13.08 L3.81 12.49 L2.36 13.42 L1.38 12.44 L2.31 10.99 L1.72 9.56 L0.04 9.19 L0.04 7.81 L1.72 7.44 L2.31 6.01 L1.38 4.56 L2.36 3.58 L3.81 4.51 L5.24 3.92 L5.61 2.24 L6.99 2.24 L7.36 3.92 L8.79 4.51 L10.24 3.58 L11.22 4.56 L10.29 6.01 L10.88 7.44Z M8.60 8.50A2.3 2.3 0 1 0 4.00 8.50A2.3 2.3 0 1 0 8.60 8.50Z" fill="#3a3633" fill-rule="evenodd"/><path d="M18.76 3.17 L18.76 4.23 L17.59 4.45 L17.04 5.39 L17.44 6.52 L16.53 7.05 L15.75 6.14 L14.65 6.14 L13.87 7.05 L12.96 6.52 L13.36 5.39 L12.81 4.45 L11.64 4.23 L11.64 3.17 L12.81 2.95 L13.36 2.01 L12.96 0.88 L13.87 0.35 L14.65 1.26 L15.75 1.26 L16.53 0.35 L17.44 0.88 L17.04 2.01 L17.59 2.95Z M16.40 3.70A1.2 1.2 0 1 0 14.00 3.70A1.2 1.2 0 1 0 16.40 3.70Z" fill="#3a3633" fill-rule="evenodd"/><path d="M18.76 12.77 L18.76 13.83 L17.59 14.05 L17.04 14.99 L17.44 16.12 L16.53 16.65 L15.75 15.74 L14.65 15.74 L13.87 16.65 L12.96 16.12 L13.36 14.99 L12.81 14.05 L11.64 13.83 L11.64 12.77 L12.81 12.55 L13.36 11.61 L12.96 10.48 L13.87 9.95 L14.65 10.86 L15.75 10.86 L16.53 9.95 L17.44 10.48 L17.04 11.61 L17.59 12.55Z M16.40 13.30A1.2 1.2 0 1 0 14.00 13.30A1.2 1.2 0 1 0 16.40 13.30Z" fill="#3a3633" fill-rule="evenodd"/></svg>
<span class="t" style="left:523.3px;top:14px;font-size:14px;line-height:16px;color:#333;transform:scaleX(0.9098);">Simulation Designer</span>
<div style="left:487px;top:34px;width:161px;height:3px;background:#187bad;"></div>
<svg style="left:659.7px;top:14.8px;" width="15.4" height="15.4" viewBox="0 0 15.4 15.4"><path d="M15.40 7.70 L13.79 9.33 L14.37 11.55 L12.15 12.15 L11.55 14.37 L9.33 13.79 L7.70 15.40 L6.07 13.79 L3.85 14.37 L3.25 12.15 L1.03 11.55 L1.61 9.33 L0.00 7.70 L1.61 6.07 L1.03 3.85 L3.25 3.25 L3.85 1.03 L6.07 1.61 L7.70 0.00 L9.33 1.61 L11.55 1.03 L12.15 3.25 L14.37 3.85 L13.79 6.07Z" fill="#3a3633"/></svg>
<span class="t" style="left:683px;top:14px;font-size:14px;line-height:16px;color:#333;transform:scaleX(0.8986);">Post-Processor</span>
<span class="t" style="left:767.8px;top:4.9px;font-size:9px;line-height:10px;color:#2f9e2f;transform:scaleX(0.9499);">BETA</span>
<span class="t" style="left:1377.6px;top:15px;font-size:14px;line-height:16px;color:#333;transform:scaleX(0.9080);">Dashboard</span>
<span class="t" style="left:1460.3px;top:15px;font-size:14px;line-height:16px;color:#333;transform:scaleX(0.9126);">Public Projects</span>
<span class="t" style="left:1565.2px;top:15px;font-size:14px;line-height:16px;color:#333;transform:scaleX(0.9097);">Forum</span>
<span class="t" style="left:1622.5px;top:15px;font-size:14px;line-height:16px;color:#333;transform:scaleX(0.9133);">Help</span>
<svg style="left:1654.8px;top:23px;" width="7.4" height="4" viewBox="0 0 7.4 4"><path d="M0 0h7.4l-3.7 4z" fill="#333"/></svg>
<span class="t" style="left:1736px;top:15px;font-size:14px;line-height:16px;color:#333;transform:scaleX(0.9040);">ahmedhussain18</span>
<svg style="left:1837.5px;top:23px;" width="7.6" height="4" viewBox="0 0 7.6 4"><path d="M0 0h7.6l-3.8 4z" fill="#333"/></svg>
<svg style="left:1871.3px;top:23px;" width="7.7" height="4" viewBox="0 0 7.7 4"><path d="M0 0h7.7l-3.85 4z" fill="#333"/></svg>
</body></html>
